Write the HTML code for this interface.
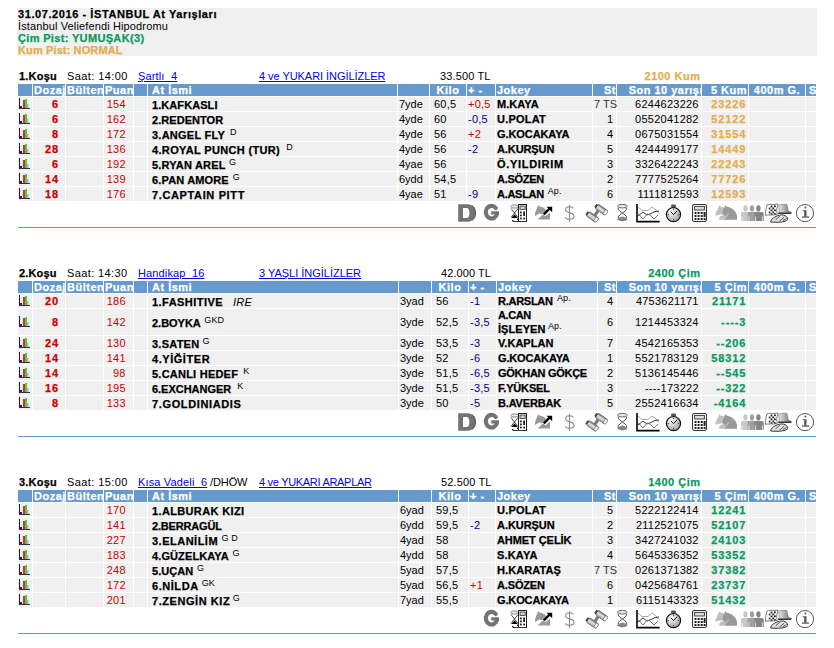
<!DOCTYPE html>
<html><head><meta charset="utf-8"><style>
html,body{margin:0;padding:0;background:#fff;width:834px;height:648px;overflow:hidden;position:relative}
body{font-family:"Liberation Sans",sans-serif;font-size:11px;color:#000}
.t{position:absolute;line-height:12px;white-space:nowrap}
.b{-webkit-text-stroke:0.3px}
.r{position:absolute}
.ci{position:absolute}
.icons{position:absolute;left:0;width:834px;height:26px}
.icons svg{position:absolute;top:0}
u{text-decoration:underline}
</style></head><body>
<div class="r" style="left:17px;top:8px;width:800px;height:48px;background:#f0f0f0"></div>
<div class="t" style="left:18px;top:8px;font-weight:bold;-webkit-text-stroke:0.25px;letter-spacing:0.58px;">31.07.2016 - İSTANBUL At Yarışları</div>
<div class="t" style="left:18px;top:20px;letter-spacing:0.13px;">İstanbul Veliefendi Hipodromu</div>
<div class="t" style="left:18px;top:32px;font-weight:bold;-webkit-text-stroke:0.25px;color:#0a9a5e;letter-spacing:0.34px;">Çim Pist: YUMUŞAK(3)</div>
<div class="t" style="left:18px;top:44px;font-weight:bold;-webkit-text-stroke:0.25px;color:#e3ae4e;letter-spacing:0.122px;">Kum Pist: NORMAL</div>
<div class="t" style="left:19px;top:70px;font-weight:bold;-webkit-text-stroke:0.25px;letter-spacing:0.2px;">1.Koşu</div>
<div class="t" style="left:67px;top:70px;letter-spacing:0.4px;">Saat: 14:00</div>
<div class="t" style="left:138px;top:70px;color:#0000ee;letter-spacing:0.15px;"><u>Şartlı&nbsp; 4</u></div>
<div class="t" style="left:259px;top:70px;color:#0000ee;letter-spacing:-0.052px;"><u>4 ve YUKARI İNGİLİZLER</u></div>
<div class="t" style="left:440px;top:70px;letter-spacing:0.125px;">33.500 TL</div>
<div class="t" style="left:400.5px;top:70px;width:300px;text-align:right;font-weight:bold;-webkit-text-stroke:0.25px;color:#e3ae4e;letter-spacing:0.5px;">2100 Kum</div>
<div class="r" style="left:18px;top:84px;width:14px;height:12px;background:#6699cc;overflow:hidden"></div>
<div class="r" style="left:33px;top:84px;width:32px;height:12px;background:#6699cc;overflow:hidden"><div class="t" style="top:0;left:1px;font-weight:bold;-webkit-text-stroke:0.25px;color:#fff;letter-spacing:0.5px">Dozaj</div></div>
<div class="r" style="left:66px;top:84px;width:37px;height:12px;background:#6699cc;overflow:hidden"><div class="t" style="top:0;left:1px;font-weight:bold;-webkit-text-stroke:0.25px;color:#fff;letter-spacing:0.5px">Bülten</div></div>
<div class="r" style="left:104px;top:84px;width:29px;height:12px;background:#6699cc;overflow:hidden"><div class="t" style="top:0;left:1px;font-weight:bold;-webkit-text-stroke:0.25px;color:#fff;letter-spacing:0.5px">Puan</div></div>
<div class="r" style="left:134px;top:84px;width:13px;height:12px;background:#6699cc;overflow:hidden"></div>
<div class="r" style="left:148px;top:84px;width:249px;height:12px;background:#6699cc;overflow:hidden"><div class="t" style="top:0;left:4px;font-weight:bold;-webkit-text-stroke:0.25px;color:#fff;letter-spacing:0.5px">At İsmi</div></div>
<div class="r" style="left:398px;top:84px;width:31px;height:12px;background:#6699cc;overflow:hidden"></div>
<div class="r" style="left:430px;top:84px;width:36px;height:12px;background:#6699cc;overflow:hidden"><div class="t" style="top:0;left:-50px;width:136px;text-align:center;font-weight:bold;-webkit-text-stroke:0.25px;color:#fff;letter-spacing:0.5px">Kilo</div></div>
<div class="r" style="left:467px;top:84px;width:28px;height:12px;background:#6699cc;overflow:hidden"><div class="t" style="top:0;left:1px;font-weight:bold;-webkit-text-stroke:0.25px;color:#fff;letter-spacing:0.5px">+ -</div></div>
<div class="r" style="left:496px;top:84px;width:96px;height:12px;background:#6699cc;overflow:hidden"><div class="t" style="top:0;left:1px;font-weight:bold;-webkit-text-stroke:0.25px;color:#fff;letter-spacing:0.5px">Jokey</div></div>
<div class="r" style="left:593px;top:84px;width:23px;height:12px;background:#6699cc;overflow:hidden"><div class="t" style="top:0;right:0px;font-weight:bold;-webkit-text-stroke:0.25px;color:#fff;letter-spacing:0.5px">St</div></div>
<div class="r" style="left:617px;top:84px;width:84px;height:12px;background:#6699cc;overflow:hidden"><div class="t" style="top:0;right:-2px;font-weight:bold;-webkit-text-stroke:0.25px;color:#fff;letter-spacing:0.5px">Son 10 yarışı</div></div>
<div class="r" style="left:702px;top:84px;width:46px;height:12px;background:#6699cc;overflow:hidden"><div class="t" style="top:0;right:1px;font-weight:bold;-webkit-text-stroke:0.25px;color:#fff;letter-spacing:0.5px">5 Kum</div></div>
<div class="r" style="left:749px;top:84px;width:56px;height:12px;background:#6699cc;overflow:hidden"><div class="t" style="top:0;left:-50px;width:156px;text-align:center;font-weight:bold;-webkit-text-stroke:0.25px;color:#fff;letter-spacing:0.5px">400m G.</div></div>
<div class="r" style="left:806px;top:84px;width:10px;height:12px;background:#6699cc;overflow:hidden"><div class="t" style="top:0;left:3px;font-weight:bold;-webkit-text-stroke:0.25px;color:#fff;letter-spacing:0.5px">S</div></div>
<div class="r" style="left:18px;top:97px;width:14px;height:14px;background:#f0f0f0"></div>
<div class="r" style="left:33px;top:97px;width:32px;height:14px;background:#f0f0f0"></div>
<div class="r" style="left:66px;top:97px;width:37px;height:14px;background:#f0f0f0"></div>
<div class="r" style="left:104px;top:97px;width:29px;height:14px;background:#f0f0f0"></div>
<div class="r" style="left:134px;top:97px;width:13px;height:14px;background:#f0f0f0"></div>
<div class="r" style="left:148px;top:97px;width:249px;height:14px;background:#f0f0f0"></div>
<div class="r" style="left:398px;top:97px;width:31px;height:14px;background:#f0f0f0"></div>
<div class="r" style="left:430px;top:97px;width:36px;height:14px;background:#f0f0f0"></div>
<div class="r" style="left:467px;top:97px;width:28px;height:14px;background:#f0f0f0"></div>
<div class="r" style="left:496px;top:97px;width:96px;height:14px;background:#f0f0f0"></div>
<div class="r" style="left:593px;top:97px;width:23px;height:14px;background:#f0f0f0"></div>
<div class="r" style="left:617px;top:97px;width:84px;height:14px;background:#f0f0f0"></div>
<div class="r" style="left:702px;top:97px;width:46px;height:14px;background:#f0f0f0"></div>
<div class="r" style="left:749px;top:97px;width:56px;height:14px;background:#f0f0f0"></div>
<div class="r" style="left:806px;top:97px;width:10px;height:14px;background:#f0f0f0"></div>
<svg class="ci" style="left:18px;top:97px" width="14" height="14" viewBox="0 0 14 14"><rect x="1" y="1" width="1" height="11" fill="#222"/><rect x="1" y="11" width="11" height="1" fill="#333"/><rect x="2" y="9" width="2" height="2" fill="#660066"/><rect x="4" y="7" width="1" height="4" fill="#cceeff"/><rect x="5" y="3" width="2" height="8" fill="#ee2222"/><rect x="7" y="2" width="2" height="9" fill="#33dd33"/><rect x="9" y="7" width="1.5" height="4" fill="#aaaaff"/></svg>
<div class="t" style="left:-241.2px;top:98px;width:300px;text-align:right;font-weight:bold;-webkit-text-stroke:0.25px;color:#cc0000;letter-spacing:0.8px;">6</div>
<div class="t" style="left:-174.25px;top:98px;width:300px;text-align:right;color:#cc0000;letter-spacing:0.25px;">154</div>
<div class="t" style="left:152px;top:99px;font-weight:bold;-webkit-text-stroke:0.25px;letter-spacing:0.074px;">1.KAFKASLI</div>
<div class="t" style="left:399px;top:98px;letter-spacing:0px;">7yde</div>
<div class="t" style="left:434px;top:98px;letter-spacing:0.25px;">60,5</div>
<div class="t" style="left:468px;top:98px;color:#cc0000;letter-spacing:0.25px;">+0,5</div>
<div class="t" style="left:497px;top:98px;font-weight:bold;-webkit-text-stroke:0.25px;letter-spacing:0.05px;">M.KAYA</div>
<div class="t" style="left:594px;top:98px;color:#333;letter-spacing:0.05px;">7 TS</div>
<div class="t" style="left:398.75px;top:98px;width:300px;text-align:right;letter-spacing:0.25px;">6244623226</div>
<div class="t" style="left:446.4px;top:98px;width:300px;text-align:right;font-weight:bold;-webkit-text-stroke:0.25px;color:#e3ae4e;letter-spacing:0.9px;">23226</div>
<div class="r" style="left:18px;top:112px;width:14px;height:14px;background:#f0f0f0"></div>
<div class="r" style="left:33px;top:112px;width:32px;height:14px;background:#f0f0f0"></div>
<div class="r" style="left:66px;top:112px;width:37px;height:14px;background:#f0f0f0"></div>
<div class="r" style="left:104px;top:112px;width:29px;height:14px;background:#f0f0f0"></div>
<div class="r" style="left:134px;top:112px;width:13px;height:14px;background:#f0f0f0"></div>
<div class="r" style="left:148px;top:112px;width:249px;height:14px;background:#f0f0f0"></div>
<div class="r" style="left:398px;top:112px;width:31px;height:14px;background:#f0f0f0"></div>
<div class="r" style="left:430px;top:112px;width:36px;height:14px;background:#f0f0f0"></div>
<div class="r" style="left:467px;top:112px;width:28px;height:14px;background:#f0f0f0"></div>
<div class="r" style="left:496px;top:112px;width:96px;height:14px;background:#f0f0f0"></div>
<div class="r" style="left:593px;top:112px;width:23px;height:14px;background:#f0f0f0"></div>
<div class="r" style="left:617px;top:112px;width:84px;height:14px;background:#f0f0f0"></div>
<div class="r" style="left:702px;top:112px;width:46px;height:14px;background:#f0f0f0"></div>
<div class="r" style="left:749px;top:112px;width:56px;height:14px;background:#f0f0f0"></div>
<div class="r" style="left:806px;top:112px;width:10px;height:14px;background:#f0f0f0"></div>
<svg class="ci" style="left:18px;top:112px" width="14" height="14" viewBox="0 0 14 14"><rect x="1" y="1" width="1" height="11" fill="#222"/><rect x="1" y="11" width="11" height="1" fill="#333"/><rect x="2" y="9" width="2" height="2" fill="#660066"/><rect x="4" y="7" width="1" height="4" fill="#cceeff"/><rect x="5" y="3" width="2" height="8" fill="#ee2222"/><rect x="7" y="2" width="2" height="9" fill="#33dd33"/><rect x="9" y="7" width="1.5" height="4" fill="#aaaaff"/></svg>
<div class="t" style="left:-241.2px;top:113px;width:300px;text-align:right;font-weight:bold;-webkit-text-stroke:0.25px;color:#cc0000;letter-spacing:0.8px;">6</div>
<div class="t" style="left:-174.25px;top:113px;width:300px;text-align:right;color:#cc0000;letter-spacing:0.25px;">162</div>
<div class="t" style="left:152px;top:114px;font-weight:bold;-webkit-text-stroke:0.25px;letter-spacing:0.05px;">2.REDENTOR</div>
<div class="t" style="left:399px;top:113px;letter-spacing:0px;">4yde</div>
<div class="t" style="left:434px;top:113px;letter-spacing:0.25px;">60</div>
<div class="t" style="left:468px;top:113px;color:#000080;letter-spacing:0.25px;">-0,5</div>
<div class="t" style="left:497px;top:113px;font-weight:bold;-webkit-text-stroke:0.25px;letter-spacing:0.217px;">U.POLAT</div>
<div class="t" style="left:313px;top:113px;width:300px;text-align:right;">1</div>
<div class="t" style="left:398.75px;top:113px;width:300px;text-align:right;letter-spacing:0.25px;">0552041282</div>
<div class="t" style="left:446.4px;top:113px;width:300px;text-align:right;font-weight:bold;-webkit-text-stroke:0.25px;color:#e3ae4e;letter-spacing:0.9px;">52122</div>
<div class="r" style="left:18px;top:127px;width:14px;height:14px;background:#f0f0f0"></div>
<div class="r" style="left:33px;top:127px;width:32px;height:14px;background:#f0f0f0"></div>
<div class="r" style="left:66px;top:127px;width:37px;height:14px;background:#f0f0f0"></div>
<div class="r" style="left:104px;top:127px;width:29px;height:14px;background:#f0f0f0"></div>
<div class="r" style="left:134px;top:127px;width:13px;height:14px;background:#f0f0f0"></div>
<div class="r" style="left:148px;top:127px;width:249px;height:14px;background:#f0f0f0"></div>
<div class="r" style="left:398px;top:127px;width:31px;height:14px;background:#f0f0f0"></div>
<div class="r" style="left:430px;top:127px;width:36px;height:14px;background:#f0f0f0"></div>
<div class="r" style="left:467px;top:127px;width:28px;height:14px;background:#f0f0f0"></div>
<div class="r" style="left:496px;top:127px;width:96px;height:14px;background:#f0f0f0"></div>
<div class="r" style="left:593px;top:127px;width:23px;height:14px;background:#f0f0f0"></div>
<div class="r" style="left:617px;top:127px;width:84px;height:14px;background:#f0f0f0"></div>
<div class="r" style="left:702px;top:127px;width:46px;height:14px;background:#f0f0f0"></div>
<div class="r" style="left:749px;top:127px;width:56px;height:14px;background:#f0f0f0"></div>
<div class="r" style="left:806px;top:127px;width:10px;height:14px;background:#f0f0f0"></div>
<svg class="ci" style="left:18px;top:127px" width="14" height="14" viewBox="0 0 14 14"><rect x="1" y="1" width="1" height="11" fill="#222"/><rect x="1" y="11" width="11" height="1" fill="#333"/><rect x="2" y="9" width="2" height="2" fill="#660066"/><rect x="4" y="7" width="1" height="4" fill="#cceeff"/><rect x="5" y="3" width="2" height="8" fill="#ee2222"/><rect x="7" y="2" width="2" height="9" fill="#33dd33"/><rect x="9" y="7" width="1.5" height="4" fill="#aaaaff"/></svg>
<div class="t" style="left:-241.2px;top:128px;width:300px;text-align:right;font-weight:bold;-webkit-text-stroke:0.25px;color:#cc0000;letter-spacing:0.8px;">8</div>
<div class="t" style="left:-174.25px;top:128px;width:300px;text-align:right;color:#cc0000;letter-spacing:0.25px;">172</div>
<div class="t" style="left:152px;top:129px;font-weight:bold;-webkit-text-stroke:0.25px;letter-spacing:0.25px;">3.ANGEL FLY</div>
<div class="t" style="left:230px;top:126px;letter-spacing:0.1px;font-size:9px;">D</div>
<div class="t" style="left:399px;top:128px;letter-spacing:0px;">4yde</div>
<div class="t" style="left:434px;top:128px;letter-spacing:0.25px;">56</div>
<div class="t" style="left:468px;top:128px;color:#cc0000;letter-spacing:0.25px;">+2</div>
<div class="t" style="left:497px;top:128px;font-weight:bold;-webkit-text-stroke:0.25px;letter-spacing:-0.085px;">G.KOCAKAYA</div>
<div class="t" style="left:313px;top:128px;width:300px;text-align:right;">4</div>
<div class="t" style="left:398.75px;top:128px;width:300px;text-align:right;letter-spacing:0.25px;">0675031554</div>
<div class="t" style="left:446.4px;top:128px;width:300px;text-align:right;font-weight:bold;-webkit-text-stroke:0.25px;color:#e3ae4e;letter-spacing:0.9px;">31554</div>
<div class="r" style="left:18px;top:142px;width:14px;height:14px;background:#f0f0f0"></div>
<div class="r" style="left:33px;top:142px;width:32px;height:14px;background:#f0f0f0"></div>
<div class="r" style="left:66px;top:142px;width:37px;height:14px;background:#f0f0f0"></div>
<div class="r" style="left:104px;top:142px;width:29px;height:14px;background:#f0f0f0"></div>
<div class="r" style="left:134px;top:142px;width:13px;height:14px;background:#f0f0f0"></div>
<div class="r" style="left:148px;top:142px;width:249px;height:14px;background:#f0f0f0"></div>
<div class="r" style="left:398px;top:142px;width:31px;height:14px;background:#f0f0f0"></div>
<div class="r" style="left:430px;top:142px;width:36px;height:14px;background:#f0f0f0"></div>
<div class="r" style="left:467px;top:142px;width:28px;height:14px;background:#f0f0f0"></div>
<div class="r" style="left:496px;top:142px;width:96px;height:14px;background:#f0f0f0"></div>
<div class="r" style="left:593px;top:142px;width:23px;height:14px;background:#f0f0f0"></div>
<div class="r" style="left:617px;top:142px;width:84px;height:14px;background:#f0f0f0"></div>
<div class="r" style="left:702px;top:142px;width:46px;height:14px;background:#f0f0f0"></div>
<div class="r" style="left:749px;top:142px;width:56px;height:14px;background:#f0f0f0"></div>
<div class="r" style="left:806px;top:142px;width:10px;height:14px;background:#f0f0f0"></div>
<svg class="ci" style="left:18px;top:142px" width="14" height="14" viewBox="0 0 14 14"><rect x="1" y="1" width="1" height="11" fill="#222"/><rect x="1" y="11" width="11" height="1" fill="#333"/><rect x="2" y="9" width="2" height="2" fill="#660066"/><rect x="4" y="7" width="1" height="4" fill="#cceeff"/><rect x="5" y="3" width="2" height="8" fill="#ee2222"/><rect x="7" y="2" width="2" height="9" fill="#33dd33"/><rect x="9" y="7" width="1.5" height="4" fill="#aaaaff"/></svg>
<div class="t" style="left:-241.2px;top:143px;width:300px;text-align:right;font-weight:bold;-webkit-text-stroke:0.25px;color:#cc0000;letter-spacing:0.8px;">28</div>
<div class="t" style="left:-174.25px;top:143px;width:300px;text-align:right;color:#cc0000;letter-spacing:0.25px;">136</div>
<div class="t" style="left:152px;top:144px;font-weight:bold;-webkit-text-stroke:0.25px;letter-spacing:0.339px;">4.ROYAL PUNCH (TUR)</div>
<div class="t" style="left:286.3px;top:141px;letter-spacing:0.1px;font-size:9px;">D</div>
<div class="t" style="left:399px;top:143px;letter-spacing:0px;">4yde</div>
<div class="t" style="left:434px;top:143px;letter-spacing:0.25px;">56</div>
<div class="t" style="left:468px;top:143px;color:#000080;letter-spacing:0.25px;">-2</div>
<div class="t" style="left:497px;top:143px;font-weight:bold;-webkit-text-stroke:0.25px;letter-spacing:-0.093px;">A.KURŞUN</div>
<div class="t" style="left:313px;top:143px;width:300px;text-align:right;">5</div>
<div class="t" style="left:398.75px;top:143px;width:300px;text-align:right;letter-spacing:0.25px;">4244499177</div>
<div class="t" style="left:446.4px;top:143px;width:300px;text-align:right;font-weight:bold;-webkit-text-stroke:0.25px;color:#e3ae4e;letter-spacing:0.9px;">14449</div>
<div class="r" style="left:18px;top:157px;width:14px;height:14px;background:#f0f0f0"></div>
<div class="r" style="left:33px;top:157px;width:32px;height:14px;background:#f0f0f0"></div>
<div class="r" style="left:66px;top:157px;width:37px;height:14px;background:#f0f0f0"></div>
<div class="r" style="left:104px;top:157px;width:29px;height:14px;background:#f0f0f0"></div>
<div class="r" style="left:134px;top:157px;width:13px;height:14px;background:#f0f0f0"></div>
<div class="r" style="left:148px;top:157px;width:249px;height:14px;background:#f0f0f0"></div>
<div class="r" style="left:398px;top:157px;width:31px;height:14px;background:#f0f0f0"></div>
<div class="r" style="left:430px;top:157px;width:36px;height:14px;background:#f0f0f0"></div>
<div class="r" style="left:467px;top:157px;width:28px;height:14px;background:#f0f0f0"></div>
<div class="r" style="left:496px;top:157px;width:96px;height:14px;background:#f0f0f0"></div>
<div class="r" style="left:593px;top:157px;width:23px;height:14px;background:#f0f0f0"></div>
<div class="r" style="left:617px;top:157px;width:84px;height:14px;background:#f0f0f0"></div>
<div class="r" style="left:702px;top:157px;width:46px;height:14px;background:#f0f0f0"></div>
<div class="r" style="left:749px;top:157px;width:56px;height:14px;background:#f0f0f0"></div>
<div class="r" style="left:806px;top:157px;width:10px;height:14px;background:#f0f0f0"></div>
<svg class="ci" style="left:18px;top:157px" width="14" height="14" viewBox="0 0 14 14"><rect x="1" y="1" width="1" height="11" fill="#222"/><rect x="1" y="11" width="11" height="1" fill="#333"/><rect x="2" y="9" width="2" height="2" fill="#660066"/><rect x="4" y="7" width="1" height="4" fill="#cceeff"/><rect x="5" y="3" width="2" height="8" fill="#ee2222"/><rect x="7" y="2" width="2" height="9" fill="#33dd33"/><rect x="9" y="7" width="1.5" height="4" fill="#aaaaff"/></svg>
<div class="t" style="left:-241.2px;top:158px;width:300px;text-align:right;font-weight:bold;-webkit-text-stroke:0.25px;color:#cc0000;letter-spacing:0.8px;">6</div>
<div class="t" style="left:-174.25px;top:158px;width:300px;text-align:right;color:#cc0000;letter-spacing:0.25px;">192</div>
<div class="t" style="left:152px;top:159px;font-weight:bold;-webkit-text-stroke:0.25px;letter-spacing:0.19px;">5.RYAN AREL</div>
<div class="t" style="left:229px;top:156px;letter-spacing:0.1px;font-size:9px;">G</div>
<div class="t" style="left:399px;top:158px;letter-spacing:0px;">4yae</div>
<div class="t" style="left:434px;top:158px;letter-spacing:0.25px;">56</div>
<div class="t" style="left:497px;top:158px;font-weight:bold;-webkit-text-stroke:0.25px;letter-spacing:0.695px;">Ö.YILDIRIM</div>
<div class="t" style="left:313px;top:158px;width:300px;text-align:right;">3</div>
<div class="t" style="left:398.75px;top:158px;width:300px;text-align:right;letter-spacing:0.25px;">3326422243</div>
<div class="t" style="left:446.4px;top:158px;width:300px;text-align:right;font-weight:bold;-webkit-text-stroke:0.25px;color:#e3ae4e;letter-spacing:0.9px;">22243</div>
<div class="r" style="left:18px;top:172px;width:14px;height:14px;background:#f0f0f0"></div>
<div class="r" style="left:33px;top:172px;width:32px;height:14px;background:#f0f0f0"></div>
<div class="r" style="left:66px;top:172px;width:37px;height:14px;background:#f0f0f0"></div>
<div class="r" style="left:104px;top:172px;width:29px;height:14px;background:#f0f0f0"></div>
<div class="r" style="left:134px;top:172px;width:13px;height:14px;background:#f0f0f0"></div>
<div class="r" style="left:148px;top:172px;width:249px;height:14px;background:#f0f0f0"></div>
<div class="r" style="left:398px;top:172px;width:31px;height:14px;background:#f0f0f0"></div>
<div class="r" style="left:430px;top:172px;width:36px;height:14px;background:#f0f0f0"></div>
<div class="r" style="left:467px;top:172px;width:28px;height:14px;background:#f0f0f0"></div>
<div class="r" style="left:496px;top:172px;width:96px;height:14px;background:#f0f0f0"></div>
<div class="r" style="left:593px;top:172px;width:23px;height:14px;background:#f0f0f0"></div>
<div class="r" style="left:617px;top:172px;width:84px;height:14px;background:#f0f0f0"></div>
<div class="r" style="left:702px;top:172px;width:46px;height:14px;background:#f0f0f0"></div>
<div class="r" style="left:749px;top:172px;width:56px;height:14px;background:#f0f0f0"></div>
<div class="r" style="left:806px;top:172px;width:10px;height:14px;background:#f0f0f0"></div>
<svg class="ci" style="left:18px;top:172px" width="14" height="14" viewBox="0 0 14 14"><rect x="1" y="1" width="1" height="11" fill="#222"/><rect x="1" y="11" width="11" height="1" fill="#333"/><rect x="2" y="9" width="2" height="2" fill="#660066"/><rect x="4" y="7" width="1" height="4" fill="#cceeff"/><rect x="5" y="3" width="2" height="8" fill="#ee2222"/><rect x="7" y="2" width="2" height="9" fill="#33dd33"/><rect x="9" y="7" width="1.5" height="4" fill="#aaaaff"/></svg>
<div class="t" style="left:-241.2px;top:173px;width:300px;text-align:right;font-weight:bold;-webkit-text-stroke:0.25px;color:#cc0000;letter-spacing:0.8px;">14</div>
<div class="t" style="left:-174.25px;top:173px;width:300px;text-align:right;color:#cc0000;letter-spacing:0.25px;">139</div>
<div class="t" style="left:152px;top:174px;font-weight:bold;-webkit-text-stroke:0.25px;letter-spacing:0.15px;">6.PAN AMORE</div>
<div class="t" style="left:232.7px;top:171px;letter-spacing:0.1px;font-size:9px;">G</div>
<div class="t" style="left:399px;top:173px;letter-spacing:0px;">6ydd</div>
<div class="t" style="left:434px;top:173px;letter-spacing:0.25px;">54,5</div>
<div class="t" style="left:497px;top:173px;font-weight:bold;-webkit-text-stroke:0.25px;letter-spacing:-0.283px;">A.SÖZEN</div>
<div class="t" style="left:313px;top:173px;width:300px;text-align:right;">2</div>
<div class="t" style="left:398.75px;top:173px;width:300px;text-align:right;letter-spacing:0.25px;">7777525264</div>
<div class="t" style="left:446.4px;top:173px;width:300px;text-align:right;font-weight:bold;-webkit-text-stroke:0.25px;color:#e3ae4e;letter-spacing:0.9px;">77726</div>
<div class="r" style="left:18px;top:187px;width:14px;height:14px;background:#f0f0f0"></div>
<div class="r" style="left:33px;top:187px;width:32px;height:14px;background:#f0f0f0"></div>
<div class="r" style="left:66px;top:187px;width:37px;height:14px;background:#f0f0f0"></div>
<div class="r" style="left:104px;top:187px;width:29px;height:14px;background:#f0f0f0"></div>
<div class="r" style="left:134px;top:187px;width:13px;height:14px;background:#f0f0f0"></div>
<div class="r" style="left:148px;top:187px;width:249px;height:14px;background:#f0f0f0"></div>
<div class="r" style="left:398px;top:187px;width:31px;height:14px;background:#f0f0f0"></div>
<div class="r" style="left:430px;top:187px;width:36px;height:14px;background:#f0f0f0"></div>
<div class="r" style="left:467px;top:187px;width:28px;height:14px;background:#f0f0f0"></div>
<div class="r" style="left:496px;top:187px;width:96px;height:14px;background:#f0f0f0"></div>
<div class="r" style="left:593px;top:187px;width:23px;height:14px;background:#f0f0f0"></div>
<div class="r" style="left:617px;top:187px;width:84px;height:14px;background:#f0f0f0"></div>
<div class="r" style="left:702px;top:187px;width:46px;height:14px;background:#f0f0f0"></div>
<div class="r" style="left:749px;top:187px;width:56px;height:14px;background:#f0f0f0"></div>
<div class="r" style="left:806px;top:187px;width:10px;height:14px;background:#f0f0f0"></div>
<svg class="ci" style="left:18px;top:187px" width="14" height="14" viewBox="0 0 14 14"><rect x="1" y="1" width="1" height="11" fill="#222"/><rect x="1" y="11" width="11" height="1" fill="#333"/><rect x="2" y="9" width="2" height="2" fill="#660066"/><rect x="4" y="7" width="1" height="4" fill="#cceeff"/><rect x="5" y="3" width="2" height="8" fill="#ee2222"/><rect x="7" y="2" width="2" height="9" fill="#33dd33"/><rect x="9" y="7" width="1.5" height="4" fill="#aaaaff"/></svg>
<div class="t" style="left:-241.2px;top:188px;width:300px;text-align:right;font-weight:bold;-webkit-text-stroke:0.25px;color:#cc0000;letter-spacing:0.8px;">18</div>
<div class="t" style="left:-174.25px;top:188px;width:300px;text-align:right;color:#cc0000;letter-spacing:0.25px;">176</div>
<div class="t" style="left:152px;top:189px;font-weight:bold;-webkit-text-stroke:0.25px;letter-spacing:0.634px;">7.CAPTAIN PITT</div>
<div class="t" style="left:399px;top:188px;letter-spacing:0px;">4yae</div>
<div class="t" style="left:434px;top:188px;letter-spacing:0.25px;">51</div>
<div class="t" style="left:468px;top:188px;color:#000080;letter-spacing:0.25px;">-9</div>
<div class="t" style="left:497px;top:188px;font-weight:bold;-webkit-text-stroke:0.25px;letter-spacing:-0.283px;">A.ASLAN</div>
<div class="t" style="left:547.7px;top:185px;letter-spacing:0.1px;font-size:9px;">Ap.</div>
<div class="t" style="left:313px;top:188px;width:300px;text-align:right;">6</div>
<div class="t" style="left:398.75px;top:188px;width:300px;text-align:right;letter-spacing:0.25px;">1111812593</div>
<div class="t" style="left:446.4px;top:188px;width:300px;text-align:right;font-weight:bold;-webkit-text-stroke:0.25px;color:#e3ae4e;letter-spacing:0.9px;">12593</div>
<div class="icons" style="top:202px"><svg width="834" height="26" viewBox="0 202 834 26" style="left:0;top:0"><path fill-rule="evenodd" fill="#737373" d="M458.2,204.2 H467.5 C472.6,204.2 475.5,207.8 475.5,213 C475.5,218.2 472.6,221.7 467.5,221.7 H458.2 Z M463,208 H466.6 C468.4,208 469.4,209.8 469.4,213 C469.4,216.2 468.4,218 466.6,218 H463 Z"/><path d="M472,205.6 C474.6,207.2 475.6,210 475.6,213 C475.6,216 474.6,218.8 472,220.4" stroke="#222" stroke-width="0.7" fill="none"/></svg>
<svg width="834" height="26" viewBox="0 202 834 26" style="left:0;top:0">
<defs>
<linearGradient id="gb" x1="0" y1="0" x2="1" y2="1"><stop offset="0" stop-color="#444"/><stop offset="0.5" stop-color="#bbb"/><stop offset="1" stop-color="#555"/></linearGradient>
<linearGradient id="gb2" x1="0" y1="0" x2="0" y2="1"><stop offset="0" stop-color="#666"/><stop offset="0.45" stop-color="#e6e6e6"/><stop offset="1" stop-color="#999"/></linearGradient>
<radialGradient id="gs" cx="0.35" cy="0.3" r="0.8"><stop offset="0" stop-color="#fff"/><stop offset="1" stop-color="#999"/></radialGradient>
<linearGradient id="gh2" x1="0" y1="0" x2="1" y2="0"><stop offset="0" stop-color="#bbb"/><stop offset="1" stop-color="#555"/></linearGradient>
<linearGradient id="gh3" x1="0" y1="0" x2="1" y2="0"><stop offset="0" stop-color="#e8e8e8"/><stop offset="0.5" stop-color="#aaa"/><stop offset="1" stop-color="#666"/></linearGradient>
<linearGradient id="gh" x1="0" y1="0" x2="1" y2="0"><stop offset="0" stop-color="#eee"/><stop offset="1" stop-color="#666"/></linearGradient>
</defs>
<path d="M495.8,208 A5.7,6.3 0 1 0 497.1,213.6" stroke="#737373" stroke-width="4.1" fill="none" stroke-linecap="round"/><path d="M491.2,212.9 H498.9" stroke="#737373" stroke-width="3.2" fill="none"/>
<g>
<ellipse cx="514.5" cy="206.5" rx="3.6" ry="1.6" fill="#f4f4f4" stroke="#777" stroke-width="0.9"/>
<path d="M511,208.5 L518,217.5 M518,208.5 L511,217.5" stroke="#333" stroke-width="0.9"/>
<path d="M511.2,218 L514.5,214.6 L517.8,218 Z" fill="#000"/>
<rect x="518.5" y="204.5" width="8" height="17" fill="#fff" stroke="#222" stroke-width="1"/>
<rect x="520" y="206" width="5.2" height="3.4" fill="#ccc" stroke="#333" stroke-width="0.8"/>
<g fill="#222"><rect x="520" y="211.5" width="1.8" height="1.8"/><rect x="523.2" y="211.5" width="1.8" height="4.5"/><rect x="520" y="214.5" width="1.8" height="1.8"/><rect x="520" y="217.6" width="1.8" height="1.8"/><rect x="523.2" y="217.6" width="1.8" height="1.8"/><rect x="517" y="218.6" width="1.4" height="1.4"/><rect x="512" y="220" width="1.4" height="1.4"/></g>
<rect x="513" y="221" width="13.5" height="1" fill="#333"/>
</g>
<g fill="#999">
<path d="M538.4,205 L539.5,206.5 C543,206.8 545.5,208.6 546.2,210.6 L541.6,214.6 L539.6,213.2 L535,216 C534.6,213 536.4,209 538.4,205 Z"/>
<path d="M537.5,219.6 L543.2,214.2 L545.2,216.6 L550,212.4 L550,219.6 Z"/>
</g>
<path d="M543.8,214.4 L550.2,208" stroke="#000" stroke-width="2.4"/>
<path d="M546.5,206.7 L552.2,206.7 L552.2,212.2 Z" fill="#000"/>
<path d="M569.5,205 V222 M573.3,208.4 C573,207.2 571.6,206.8 569.5,206.8 C567,206.8 565.6,208 565.6,209.7 C565.6,211.6 567.8,212.4 570,212.9 C572.6,213.5 574,214.7 574,216.6 C574,218.6 572.2,219.3 569.5,219.3 C567.2,219.3 565.8,218.6 565.4,217.3" stroke="#8a8a8a" stroke-width="1.1" fill="none"/>
<g transform="rotate(35 596.5 213)">
<rect x="589.5" y="215.8" width="12" height="5.6" rx="2" fill="url(#gb2)" stroke="#555" stroke-width="0.6"/>
<rect x="592.5" y="204.6" width="12" height="5.6" rx="2" fill="url(#gb2)" stroke="#555" stroke-width="0.6"/>
<rect x="595" y="210.2" width="3" height="5.6" fill="#777"/>
<ellipse cx="600" cy="218.6" rx="1.7" ry="2.8" fill="#f4f4f4" stroke="#555" stroke-width="0.6"/>
<ellipse cx="603.5" cy="207.4" rx="1.7" ry="2.8" fill="#f4f4f4" stroke="#555" stroke-width="0.6"/>
<rect x="588.2" y="216.6" width="2" height="4" fill="#444"/>
<rect x="591.2" y="205.4" width="2" height="4" fill="#444"/>
</g>
<g>
<ellipse cx="622.4" cy="206.2" rx="4.9" ry="1.8" fill="#e8e8e8" stroke="#666" stroke-width="1"/>
<path d="M618,207.8 C618,211 621.6,212 622.4,213 C623.2,212 626.8,211 626.8,207.8 M618,218.4 C618,215 621.6,214 622.4,213 C623.2,214 626.8,215 626.8,218.4" stroke="#333" stroke-width="0.9" fill="none"/>
<path d="M617.6,219.5 Q622.4,214.5 627.2,219.5 Q622.4,222.4 617.6,219.5 Z" fill="#888" stroke="#555" stroke-width="0.6"/>
</g>
<path d="M637,204 V221.6 H659.6" stroke="#000" stroke-width="1.6" fill="none"/>
<polyline points="638,207 642,210.5 648,210.5 652,207 655,209 659,213.5" stroke="#aaa" stroke-width="1" fill="none"/>
<polyline points="638,216 643,212 647,215 651,213.5 655,211.5 659,211" stroke="#222" stroke-width="0.9" fill="none"/>
<polyline points="638,213.5 643,219 647,214 650,215 654,219 658,215" stroke="#666" stroke-width="0.9" fill="none"/>
<rect x="671" y="204.6" width="5" height="2.6" rx="1.2" fill="#555"/>
<circle cx="673.5" cy="214.6" r="7.1" fill="url(#gs)" stroke="#111" stroke-width="1.2"/>
<polyline points="670.8,211.8 673.5,214.6 677.2,210.8" stroke="#111" stroke-width="1" fill="none"/>
<path d="M673.5,208.6 V210.2 M673.5,219 V220.6 M667.6,214.6 H669.2 M677.8,214.6 H679.4" stroke="#555" stroke-width="1"/>
<rect x="692.5" y="204.5" width="14" height="17" rx="1.5" fill="#fafafa" stroke="#333" stroke-width="1"/>
<rect x="694.6" y="206.4" width="9.8" height="3.6" fill="#ddd" stroke="#333" stroke-width="0.9"/>
<g fill="#222"><rect x="694.5" y="212" width="2" height="2"/><rect x="697.6" y="212" width="2" height="2"/><rect x="700.7" y="212" width="2" height="2"/><rect x="703.6" y="212" width="2" height="5"/>
<rect x="694.5" y="215" width="2" height="2"/><rect x="697.6" y="215" width="2" height="2"/><rect x="700.7" y="215" width="2" height="2"/>
<rect x="694.5" y="218" width="2" height="2"/><rect x="697.6" y="218" width="2" height="2"/><rect x="700.7" y="218" width="2" height="2"/><rect x="703.6" y="218" width="2" height="2"/></g>
<g fill="#c0c0c0">
<path d="M719.3,205 L720.3,206.6 C722,206.8 723.6,207.4 725,208.4 L723,214 L720.6,214.4 L716.4,215.6 C715.4,215.6 715,214.6 715.4,213.8 C716.8,210.6 718.4,208 719.3,205 Z"/>
<path d="M719,219.8 L719.6,217.2 C720.2,215.8 722,215.2 724,215 L725.6,219.8 Z"/>
</g>
<path d="M725.4,205 L726.4,206.4 C731.6,207.2 736.4,211 737,216 V219.8 H725 L724.4,215 C723.6,214.9 723,214.8 722.4,214.6 C722,212 723.6,208.6 725.4,205 Z" fill="#999"/>
<path d="M724.8,218.6 L728.6,213.4" stroke="#c4c4c4" stroke-width="1.1"/>
<g>
<ellipse cx="745.4" cy="208.4" rx="2.1" ry="3.1" fill="#c8c8c8"/>
<path d="M741,221 V213.6 C741,212.6 741.8,212 742.8,212 H748.5 V221 Z" fill="#c8c8c8"/>
<ellipse cx="752" cy="208.4" rx="2.1" ry="3.1" fill="#a0a0a0"/>
<path d="M747.6,221 V212 H755.5 V221 Z" fill="#a0a0a0"/>
<ellipse cx="758.4" cy="208.4" rx="2.2" ry="3.1" fill="#858585"/>
<path d="M754.4,221 V212 H761.8 C763,212 763.8,212.8 763.8,214 V221 Z" fill="#858585"/>
<path d="M742.2,216.4 V221 M749,216.4 V221 M755.6,216.4 V221 M762.4,216.4 V221" stroke="#f4f4f4" stroke-width="0.8"/>
</g>
<g>
<path d="M767,205 C769,204 772,204.6 774,204.4 C775.5,204.3 777,204 778,204.2 L776.6,209.6 L777.2,214.6 C775,214.8 772,215.2 770,215 C768.5,214.9 767,215 765.6,215.4 C765.4,212 766,208 767,205 Z" fill="#fff" stroke="#444" stroke-width="0.7"/>
<g fill="#222"><rect x="770.6" y="205.6" width="1.8" height="1.8"/><rect x="774" y="205.4" width="1.8" height="1.8"/><rect x="772.3" y="207.5" width="1.8" height="1.8"/><rect x="768.8" y="207.6" width="1.6" height="1.8"/><rect x="770.6" y="209.5" width="1.8" height="1.8"/><rect x="774" y="209.4" width="1.8" height="1.8"/><rect x="772.3" y="211.5" width="1.8" height="1.8"/><rect x="768.8" y="211.6" width="1.6" height="1.8"/><rect x="770.6" y="213.2" width="1.8" height="1.4"/><rect x="774" y="213.2" width="1.8" height="1.4"/></g>
<path d="M778.6,205.4 C779.4,204.4 784,204 787,204.4 L788.2,211 L791.4,212.4 L791,213.4 L779.6,213.4 Z" fill="url(#gh3)" stroke="#666" stroke-width="0.5"/>
<path d="M778,212.4 H788.6 L791.8,212.8 L790.8,214 H778 Z" fill="#3a3a3a"/>
<path d="M770.6,222 C771,219.4 773,217.8 776,216.4 C778,215.4 781,214.6 783.4,215 C786,215.6 788,217.6 787.8,219.6 C786,221.8 780,222.8 770.6,222 Z" fill="#e0e0e0" stroke="#222" stroke-width="0.9"/>
<path d="M775.6,219.8 L779.8,216.2 M779.4,221.2 L784.2,217.2 M783,220.6 L786.6,218.6" stroke="#444" stroke-width="0.9"/>
<circle cx="805" cy="213.1" r="8.6" fill="none" stroke="#555" stroke-width="1"/>
<g fill="#555"><circle cx="805.4" cy="207.4" r="1"/><rect x="804.2" y="210.2" width="2.3" height="6.4"/><rect x="802.8" y="210.2" width="1.6" height="1"/><rect x="802" y="216.4" width="7" height="1.3"/></g>
</svg>
</div>
<div class="r" style="left:18px;top:227px;width:798px;height:1px;background:#6699cc"></div>
<div class="t" style="left:19px;top:267px;font-weight:bold;-webkit-text-stroke:0.25px;letter-spacing:0.16px;">2.Koşu</div>
<div class="t" style="left:67px;top:267px;letter-spacing:0.39px;">Saat: 14:30</div>
<div class="t" style="left:138px;top:267px;color:#0000ee;letter-spacing:0.13px;"><u>Handikap&nbsp; 16</u></div>
<div class="t" style="left:259px;top:267px;color:#0000ee;letter-spacing:-0.016px;"><u>3 YAŞLI İNGİLİZLER</u></div>
<div class="t" style="left:441px;top:267px;letter-spacing:0.075px;">42.000 TL</div>
<div class="t" style="left:400.5px;top:267px;width:300px;text-align:right;font-weight:bold;-webkit-text-stroke:0.25px;color:#0a9a5e;letter-spacing:0.5px;">2400 Çim</div>
<div class="r" style="left:18px;top:281px;width:14px;height:12px;background:#6699cc;overflow:hidden"></div>
<div class="r" style="left:33px;top:281px;width:32px;height:12px;background:#6699cc;overflow:hidden"><div class="t" style="top:0;left:1px;font-weight:bold;-webkit-text-stroke:0.25px;color:#fff;letter-spacing:0.5px">Dozaj</div></div>
<div class="r" style="left:66px;top:281px;width:37px;height:12px;background:#6699cc;overflow:hidden"><div class="t" style="top:0;left:1px;font-weight:bold;-webkit-text-stroke:0.25px;color:#fff;letter-spacing:0.5px">Bülten</div></div>
<div class="r" style="left:104px;top:281px;width:29px;height:12px;background:#6699cc;overflow:hidden"><div class="t" style="top:0;left:1px;font-weight:bold;-webkit-text-stroke:0.25px;color:#fff;letter-spacing:0.5px">Puan</div></div>
<div class="r" style="left:134px;top:281px;width:13px;height:12px;background:#6699cc;overflow:hidden"></div>
<div class="r" style="left:148px;top:281px;width:250px;height:12px;background:#6699cc;overflow:hidden"><div class="t" style="top:0;left:4px;font-weight:bold;-webkit-text-stroke:0.25px;color:#fff;letter-spacing:0.5px">At İsmi</div></div>
<div class="r" style="left:399px;top:281px;width:32px;height:12px;background:#6699cc;overflow:hidden"></div>
<div class="r" style="left:432px;top:281px;width:36px;height:12px;background:#6699cc;overflow:hidden"><div class="t" style="top:0;left:-50px;width:136px;text-align:center;font-weight:bold;-webkit-text-stroke:0.25px;color:#fff;letter-spacing:0.5px">Kilo</div></div>
<div class="r" style="left:469px;top:281px;width:27px;height:12px;background:#6699cc;overflow:hidden"><div class="t" style="top:0;left:1px;font-weight:bold;-webkit-text-stroke:0.25px;color:#fff;letter-spacing:0.5px">+ -</div></div>
<div class="r" style="left:497px;top:281px;width:100px;height:12px;background:#6699cc;overflow:hidden"><div class="t" style="top:0;left:1px;font-weight:bold;-webkit-text-stroke:0.25px;color:#fff;letter-spacing:0.5px">Jokey</div></div>
<div class="r" style="left:598px;top:281px;width:18px;height:12px;background:#6699cc;overflow:hidden"><div class="t" style="top:0;right:0px;font-weight:bold;-webkit-text-stroke:0.25px;color:#fff;letter-spacing:0.5px">St</div></div>
<div class="r" style="left:617px;top:281px;width:84px;height:12px;background:#6699cc;overflow:hidden"><div class="t" style="top:0;right:-2px;font-weight:bold;-webkit-text-stroke:0.25px;color:#fff;letter-spacing:0.5px">Son 10 yarışı</div></div>
<div class="r" style="left:702px;top:281px;width:46px;height:12px;background:#6699cc;overflow:hidden"><div class="t" style="top:0;right:1px;font-weight:bold;-webkit-text-stroke:0.25px;color:#fff;letter-spacing:0.5px">5 Çim</div></div>
<div class="r" style="left:749px;top:281px;width:56px;height:12px;background:#6699cc;overflow:hidden"><div class="t" style="top:0;left:-50px;width:156px;text-align:center;font-weight:bold;-webkit-text-stroke:0.25px;color:#fff;letter-spacing:0.5px">400m G.</div></div>
<div class="r" style="left:806px;top:281px;width:10px;height:12px;background:#6699cc;overflow:hidden"><div class="t" style="top:0;left:3px;font-weight:bold;-webkit-text-stroke:0.25px;color:#fff;letter-spacing:0.5px">S</div></div>
<div class="r" style="left:18px;top:294px;width:14px;height:14px;background:#f0f0f0"></div>
<div class="r" style="left:33px;top:294px;width:32px;height:14px;background:#f0f0f0"></div>
<div class="r" style="left:66px;top:294px;width:37px;height:14px;background:#f0f0f0"></div>
<div class="r" style="left:104px;top:294px;width:29px;height:14px;background:#f0f0f0"></div>
<div class="r" style="left:134px;top:294px;width:13px;height:14px;background:#f0f0f0"></div>
<div class="r" style="left:148px;top:294px;width:250px;height:14px;background:#f0f0f0"></div>
<div class="r" style="left:399px;top:294px;width:32px;height:14px;background:#f0f0f0"></div>
<div class="r" style="left:432px;top:294px;width:36px;height:14px;background:#f0f0f0"></div>
<div class="r" style="left:469px;top:294px;width:27px;height:14px;background:#f0f0f0"></div>
<div class="r" style="left:497px;top:294px;width:100px;height:14px;background:#f0f0f0"></div>
<div class="r" style="left:598px;top:294px;width:18px;height:14px;background:#f0f0f0"></div>
<div class="r" style="left:617px;top:294px;width:84px;height:14px;background:#f0f0f0"></div>
<div class="r" style="left:702px;top:294px;width:46px;height:14px;background:#f0f0f0"></div>
<div class="r" style="left:749px;top:294px;width:56px;height:14px;background:#f0f0f0"></div>
<div class="r" style="left:806px;top:294px;width:10px;height:14px;background:#f0f0f0"></div>
<svg class="ci" style="left:18px;top:294px" width="14" height="14" viewBox="0 0 14 14"><rect x="1" y="1" width="1" height="11" fill="#222"/><rect x="1" y="11" width="11" height="1" fill="#333"/><rect x="2" y="9" width="2" height="2" fill="#660066"/><rect x="4" y="7" width="1" height="4" fill="#cceeff"/><rect x="5" y="3" width="2" height="8" fill="#ee2222"/><rect x="7" y="2" width="2" height="9" fill="#33dd33"/><rect x="9" y="7" width="1.5" height="4" fill="#aaaaff"/></svg>
<div class="t" style="left:-241.2px;top:295px;width:300px;text-align:right;font-weight:bold;-webkit-text-stroke:0.25px;color:#cc0000;letter-spacing:0.8px;">20</div>
<div class="t" style="left:-174.25px;top:295px;width:300px;text-align:right;color:#cc0000;letter-spacing:0.25px;">186</div>
<div class="t" style="left:152px;top:296px;font-weight:bold;-webkit-text-stroke:0.25px;letter-spacing:0.45px;">1.FASHITIVE</div>
<div class="t" style="left:233px;top:296px;font-style:italic;letter-spacing:0.2px;">IRE</div>
<div class="t" style="left:400px;top:295px;letter-spacing:0px;">3yad</div>
<div class="t" style="left:436px;top:295px;letter-spacing:0.25px;">56</div>
<div class="t" style="left:470px;top:295px;color:#000080;letter-spacing:0.25px;">-1</div>
<div class="t" style="left:498px;top:295px;font-weight:bold;-webkit-text-stroke:0.25px;letter-spacing:-0.263px;">R.ARSLAN</div>
<div class="t" style="left:557px;top:292px;letter-spacing:0.1px;font-size:9px;">Ap.</div>
<div class="t" style="left:313px;top:295px;width:300px;text-align:right;">4</div>
<div class="t" style="left:398.75px;top:295px;width:300px;text-align:right;letter-spacing:0.25px;">4753621171</div>
<div class="t" style="left:446.4px;top:295px;width:300px;text-align:right;font-weight:bold;-webkit-text-stroke:0.25px;color:#0a9a5e;letter-spacing:0.9px;">21171</div>
<div class="r" style="left:18px;top:309px;width:14px;height:26px;background:#f0f0f0"></div>
<div class="r" style="left:33px;top:309px;width:32px;height:26px;background:#f0f0f0"></div>
<div class="r" style="left:66px;top:309px;width:37px;height:26px;background:#f0f0f0"></div>
<div class="r" style="left:104px;top:309px;width:29px;height:26px;background:#f0f0f0"></div>
<div class="r" style="left:134px;top:309px;width:13px;height:26px;background:#f0f0f0"></div>
<div class="r" style="left:148px;top:309px;width:250px;height:26px;background:#f0f0f0"></div>
<div class="r" style="left:399px;top:309px;width:32px;height:26px;background:#f0f0f0"></div>
<div class="r" style="left:432px;top:309px;width:36px;height:26px;background:#f0f0f0"></div>
<div class="r" style="left:469px;top:309px;width:27px;height:26px;background:#f0f0f0"></div>
<div class="r" style="left:497px;top:309px;width:100px;height:26px;background:#f0f0f0"></div>
<div class="r" style="left:598px;top:309px;width:18px;height:26px;background:#f0f0f0"></div>
<div class="r" style="left:617px;top:309px;width:84px;height:26px;background:#f0f0f0"></div>
<div class="r" style="left:702px;top:309px;width:46px;height:26px;background:#f0f0f0"></div>
<div class="r" style="left:749px;top:309px;width:56px;height:26px;background:#f0f0f0"></div>
<div class="r" style="left:806px;top:309px;width:10px;height:26px;background:#f0f0f0"></div>
<svg class="ci" style="left:18px;top:315px" width="14" height="14" viewBox="0 0 14 14"><rect x="1" y="1" width="1" height="11" fill="#222"/><rect x="1" y="11" width="11" height="1" fill="#333"/><rect x="2" y="9" width="2" height="2" fill="#660066"/><rect x="4" y="7" width="1" height="4" fill="#cceeff"/><rect x="5" y="3" width="2" height="8" fill="#ee2222"/><rect x="7" y="2" width="2" height="9" fill="#33dd33"/><rect x="9" y="7" width="1.5" height="4" fill="#aaaaff"/></svg>
<div class="t" style="left:-241.2px;top:316px;width:300px;text-align:right;font-weight:bold;-webkit-text-stroke:0.25px;color:#cc0000;letter-spacing:0.8px;">8</div>
<div class="t" style="left:-174.25px;top:316px;width:300px;text-align:right;color:#cc0000;letter-spacing:0.25px;">142</div>
<div class="t" style="left:152px;top:317px;font-weight:bold;-webkit-text-stroke:0.25px;letter-spacing:-0.018px;">2.BOYKA</div>
<div class="t" style="left:204.3px;top:314px;letter-spacing:0.1px;font-size:9px;">GKD</div>
<div class="t" style="left:400px;top:316px;letter-spacing:0px;">3yde</div>
<div class="t" style="left:436px;top:316px;letter-spacing:0.25px;">52,5</div>
<div class="t" style="left:470px;top:316px;color:#000080;letter-spacing:0.25px;">-3,5</div>
<div class="t" style="left:498px;top:309px;font-weight:bold;-webkit-text-stroke:0.25px;letter-spacing:-0.4px;">A.CAN</div>
<div class="t" style="left:498px;top:323px;font-weight:bold;-webkit-text-stroke:0.25px;letter-spacing:0.05px;">İŞLEYEN</div>
<div class="t" style="left:548px;top:320px;letter-spacing:0.1px;font-size:9px;">Ap.</div>
<div class="t" style="left:313px;top:316px;width:300px;text-align:right;">6</div>
<div class="t" style="left:398.75px;top:316px;width:300px;text-align:right;letter-spacing:0.25px;">1214453324</div>
<div class="t" style="left:446.4px;top:316px;width:300px;text-align:right;font-weight:bold;-webkit-text-stroke:0.25px;color:#0a9a5e;letter-spacing:0.9px;">----3</div>
<div class="r" style="left:18px;top:336px;width:14px;height:14px;background:#f0f0f0"></div>
<div class="r" style="left:33px;top:336px;width:32px;height:14px;background:#f0f0f0"></div>
<div class="r" style="left:66px;top:336px;width:37px;height:14px;background:#f0f0f0"></div>
<div class="r" style="left:104px;top:336px;width:29px;height:14px;background:#f0f0f0"></div>
<div class="r" style="left:134px;top:336px;width:13px;height:14px;background:#f0f0f0"></div>
<div class="r" style="left:148px;top:336px;width:250px;height:14px;background:#f0f0f0"></div>
<div class="r" style="left:399px;top:336px;width:32px;height:14px;background:#f0f0f0"></div>
<div class="r" style="left:432px;top:336px;width:36px;height:14px;background:#f0f0f0"></div>
<div class="r" style="left:469px;top:336px;width:27px;height:14px;background:#f0f0f0"></div>
<div class="r" style="left:497px;top:336px;width:100px;height:14px;background:#f0f0f0"></div>
<div class="r" style="left:598px;top:336px;width:18px;height:14px;background:#f0f0f0"></div>
<div class="r" style="left:617px;top:336px;width:84px;height:14px;background:#f0f0f0"></div>
<div class="r" style="left:702px;top:336px;width:46px;height:14px;background:#f0f0f0"></div>
<div class="r" style="left:749px;top:336px;width:56px;height:14px;background:#f0f0f0"></div>
<div class="r" style="left:806px;top:336px;width:10px;height:14px;background:#f0f0f0"></div>
<svg class="ci" style="left:18px;top:336px" width="14" height="14" viewBox="0 0 14 14"><rect x="1" y="1" width="1" height="11" fill="#222"/><rect x="1" y="11" width="11" height="1" fill="#333"/><rect x="2" y="9" width="2" height="2" fill="#660066"/><rect x="4" y="7" width="1" height="4" fill="#cceeff"/><rect x="5" y="3" width="2" height="8" fill="#ee2222"/><rect x="7" y="2" width="2" height="9" fill="#33dd33"/><rect x="9" y="7" width="1.5" height="4" fill="#aaaaff"/></svg>
<div class="t" style="left:-241.2px;top:337px;width:300px;text-align:right;font-weight:bold;-webkit-text-stroke:0.25px;color:#cc0000;letter-spacing:0.8px;">24</div>
<div class="t" style="left:-174.25px;top:337px;width:300px;text-align:right;color:#cc0000;letter-spacing:0.25px;">130</div>
<div class="t" style="left:152px;top:338px;font-weight:bold;-webkit-text-stroke:0.25px;letter-spacing:0.251px;">3.SATEN</div>
<div class="t" style="left:202.4px;top:335px;letter-spacing:0.1px;font-size:9px;">G</div>
<div class="t" style="left:400px;top:337px;letter-spacing:0px;">3yde</div>
<div class="t" style="left:436px;top:337px;letter-spacing:0.25px;">53,5</div>
<div class="t" style="left:470px;top:337px;color:#000080;letter-spacing:0.25px;">-3</div>
<div class="t" style="left:498px;top:337px;font-weight:bold;-webkit-text-stroke:0.25px;letter-spacing:0.022px;">V.KAPLAN</div>
<div class="t" style="left:313px;top:337px;width:300px;text-align:right;">7</div>
<div class="t" style="left:398.75px;top:337px;width:300px;text-align:right;letter-spacing:0.25px;">4542165353</div>
<div class="t" style="left:446.4px;top:337px;width:300px;text-align:right;font-weight:bold;-webkit-text-stroke:0.25px;color:#0a9a5e;letter-spacing:0.9px;">--206</div>
<div class="r" style="left:18px;top:351px;width:14px;height:14px;background:#f0f0f0"></div>
<div class="r" style="left:33px;top:351px;width:32px;height:14px;background:#f0f0f0"></div>
<div class="r" style="left:66px;top:351px;width:37px;height:14px;background:#f0f0f0"></div>
<div class="r" style="left:104px;top:351px;width:29px;height:14px;background:#f0f0f0"></div>
<div class="r" style="left:134px;top:351px;width:13px;height:14px;background:#f0f0f0"></div>
<div class="r" style="left:148px;top:351px;width:250px;height:14px;background:#f0f0f0"></div>
<div class="r" style="left:399px;top:351px;width:32px;height:14px;background:#f0f0f0"></div>
<div class="r" style="left:432px;top:351px;width:36px;height:14px;background:#f0f0f0"></div>
<div class="r" style="left:469px;top:351px;width:27px;height:14px;background:#f0f0f0"></div>
<div class="r" style="left:497px;top:351px;width:100px;height:14px;background:#f0f0f0"></div>
<div class="r" style="left:598px;top:351px;width:18px;height:14px;background:#f0f0f0"></div>
<div class="r" style="left:617px;top:351px;width:84px;height:14px;background:#f0f0f0"></div>
<div class="r" style="left:702px;top:351px;width:46px;height:14px;background:#f0f0f0"></div>
<div class="r" style="left:749px;top:351px;width:56px;height:14px;background:#f0f0f0"></div>
<div class="r" style="left:806px;top:351px;width:10px;height:14px;background:#f0f0f0"></div>
<svg class="ci" style="left:18px;top:351px" width="14" height="14" viewBox="0 0 14 14"><rect x="1" y="1" width="1" height="11" fill="#222"/><rect x="1" y="11" width="11" height="1" fill="#333"/><rect x="2" y="9" width="2" height="2" fill="#660066"/><rect x="4" y="7" width="1" height="4" fill="#cceeff"/><rect x="5" y="3" width="2" height="8" fill="#ee2222"/><rect x="7" y="2" width="2" height="9" fill="#33dd33"/><rect x="9" y="7" width="1.5" height="4" fill="#aaaaff"/></svg>
<div class="t" style="left:-241.2px;top:352px;width:300px;text-align:right;font-weight:bold;-webkit-text-stroke:0.25px;color:#cc0000;letter-spacing:0.8px;">14</div>
<div class="t" style="left:-174.25px;top:352px;width:300px;text-align:right;color:#cc0000;letter-spacing:0.25px;">141</div>
<div class="t" style="left:152px;top:353px;font-weight:bold;-webkit-text-stroke:0.25px;letter-spacing:0.55px;">4.YİĞİTER</div>
<div class="t" style="left:400px;top:352px;letter-spacing:0px;">3yde</div>
<div class="t" style="left:436px;top:352px;letter-spacing:0.25px;">52</div>
<div class="t" style="left:470px;top:352px;color:#000080;letter-spacing:0.25px;">-6</div>
<div class="t" style="left:498px;top:352px;font-weight:bold;-webkit-text-stroke:0.25px;letter-spacing:-0.151px;">G.KOCAKAYA</div>
<div class="t" style="left:313px;top:352px;width:300px;text-align:right;">1</div>
<div class="t" style="left:398.75px;top:352px;width:300px;text-align:right;letter-spacing:0.25px;">5521783129</div>
<div class="t" style="left:446.4px;top:352px;width:300px;text-align:right;font-weight:bold;-webkit-text-stroke:0.25px;color:#0a9a5e;letter-spacing:0.9px;">58312</div>
<div class="r" style="left:18px;top:366px;width:14px;height:14px;background:#f0f0f0"></div>
<div class="r" style="left:33px;top:366px;width:32px;height:14px;background:#f0f0f0"></div>
<div class="r" style="left:66px;top:366px;width:37px;height:14px;background:#f0f0f0"></div>
<div class="r" style="left:104px;top:366px;width:29px;height:14px;background:#f0f0f0"></div>
<div class="r" style="left:134px;top:366px;width:13px;height:14px;background:#f0f0f0"></div>
<div class="r" style="left:148px;top:366px;width:250px;height:14px;background:#f0f0f0"></div>
<div class="r" style="left:399px;top:366px;width:32px;height:14px;background:#f0f0f0"></div>
<div class="r" style="left:432px;top:366px;width:36px;height:14px;background:#f0f0f0"></div>
<div class="r" style="left:469px;top:366px;width:27px;height:14px;background:#f0f0f0"></div>
<div class="r" style="left:497px;top:366px;width:100px;height:14px;background:#f0f0f0"></div>
<div class="r" style="left:598px;top:366px;width:18px;height:14px;background:#f0f0f0"></div>
<div class="r" style="left:617px;top:366px;width:84px;height:14px;background:#f0f0f0"></div>
<div class="r" style="left:702px;top:366px;width:46px;height:14px;background:#f0f0f0"></div>
<div class="r" style="left:749px;top:366px;width:56px;height:14px;background:#f0f0f0"></div>
<div class="r" style="left:806px;top:366px;width:10px;height:14px;background:#f0f0f0"></div>
<svg class="ci" style="left:18px;top:366px" width="14" height="14" viewBox="0 0 14 14"><rect x="1" y="1" width="1" height="11" fill="#222"/><rect x="1" y="11" width="11" height="1" fill="#333"/><rect x="2" y="9" width="2" height="2" fill="#660066"/><rect x="4" y="7" width="1" height="4" fill="#cceeff"/><rect x="5" y="3" width="2" height="8" fill="#ee2222"/><rect x="7" y="2" width="2" height="9" fill="#33dd33"/><rect x="9" y="7" width="1.5" height="4" fill="#aaaaff"/></svg>
<div class="t" style="left:-241.2px;top:367px;width:300px;text-align:right;font-weight:bold;-webkit-text-stroke:0.25px;color:#cc0000;letter-spacing:0.8px;">14</div>
<div class="t" style="left:-174.25px;top:367px;width:300px;text-align:right;color:#cc0000;letter-spacing:0.25px;">98</div>
<div class="t" style="left:152px;top:368px;font-weight:bold;-webkit-text-stroke:0.25px;letter-spacing:0.233px;">5.CANLI HEDEF</div>
<div class="t" style="left:243.3px;top:365px;letter-spacing:0.1px;font-size:9px;">K</div>
<div class="t" style="left:400px;top:367px;letter-spacing:0px;">3yde</div>
<div class="t" style="left:436px;top:367px;letter-spacing:0.25px;">51,5</div>
<div class="t" style="left:470px;top:367px;color:#000080;letter-spacing:0.25px;">-6,5</div>
<div class="t" style="left:498px;top:367px;font-weight:bold;-webkit-text-stroke:0.25px;letter-spacing:-0.279px;">GÖKHAN GÖKÇE</div>
<div class="t" style="left:313px;top:367px;width:300px;text-align:right;">2</div>
<div class="t" style="left:398.75px;top:367px;width:300px;text-align:right;letter-spacing:0.25px;">5136145446</div>
<div class="t" style="left:446.4px;top:367px;width:300px;text-align:right;font-weight:bold;-webkit-text-stroke:0.25px;color:#0a9a5e;letter-spacing:0.9px;">--545</div>
<div class="r" style="left:18px;top:381px;width:14px;height:14px;background:#f0f0f0"></div>
<div class="r" style="left:33px;top:381px;width:32px;height:14px;background:#f0f0f0"></div>
<div class="r" style="left:66px;top:381px;width:37px;height:14px;background:#f0f0f0"></div>
<div class="r" style="left:104px;top:381px;width:29px;height:14px;background:#f0f0f0"></div>
<div class="r" style="left:134px;top:381px;width:13px;height:14px;background:#f0f0f0"></div>
<div class="r" style="left:148px;top:381px;width:250px;height:14px;background:#f0f0f0"></div>
<div class="r" style="left:399px;top:381px;width:32px;height:14px;background:#f0f0f0"></div>
<div class="r" style="left:432px;top:381px;width:36px;height:14px;background:#f0f0f0"></div>
<div class="r" style="left:469px;top:381px;width:27px;height:14px;background:#f0f0f0"></div>
<div class="r" style="left:497px;top:381px;width:100px;height:14px;background:#f0f0f0"></div>
<div class="r" style="left:598px;top:381px;width:18px;height:14px;background:#f0f0f0"></div>
<div class="r" style="left:617px;top:381px;width:84px;height:14px;background:#f0f0f0"></div>
<div class="r" style="left:702px;top:381px;width:46px;height:14px;background:#f0f0f0"></div>
<div class="r" style="left:749px;top:381px;width:56px;height:14px;background:#f0f0f0"></div>
<div class="r" style="left:806px;top:381px;width:10px;height:14px;background:#f0f0f0"></div>
<svg class="ci" style="left:18px;top:381px" width="14" height="14" viewBox="0 0 14 14"><rect x="1" y="1" width="1" height="11" fill="#222"/><rect x="1" y="11" width="11" height="1" fill="#333"/><rect x="2" y="9" width="2" height="2" fill="#660066"/><rect x="4" y="7" width="1" height="4" fill="#cceeff"/><rect x="5" y="3" width="2" height="8" fill="#ee2222"/><rect x="7" y="2" width="2" height="9" fill="#33dd33"/><rect x="9" y="7" width="1.5" height="4" fill="#aaaaff"/></svg>
<div class="t" style="left:-241.2px;top:382px;width:300px;text-align:right;font-weight:bold;-webkit-text-stroke:0.25px;color:#cc0000;letter-spacing:0.8px;">16</div>
<div class="t" style="left:-174.25px;top:382px;width:300px;text-align:right;color:#cc0000;letter-spacing:0.25px;">195</div>
<div class="t" style="left:152px;top:383px;font-weight:bold;-webkit-text-stroke:0.25px;letter-spacing:-0.03px;">6.EXCHANGER</div>
<div class="t" style="left:237.3px;top:380px;letter-spacing:0.1px;font-size:9px;">K</div>
<div class="t" style="left:400px;top:382px;letter-spacing:0px;">3yde</div>
<div class="t" style="left:436px;top:382px;letter-spacing:0.25px;">51,5</div>
<div class="t" style="left:470px;top:382px;color:#000080;letter-spacing:0.25px;">-3,5</div>
<div class="t" style="left:498px;top:382px;font-weight:bold;-webkit-text-stroke:0.25px;letter-spacing:-0.18px;">F.YÜKSEL</div>
<div class="t" style="left:313px;top:382px;width:300px;text-align:right;">3</div>
<div class="t" style="left:398.75px;top:382px;width:300px;text-align:right;letter-spacing:0.25px;">----173222</div>
<div class="t" style="left:446.4px;top:382px;width:300px;text-align:right;font-weight:bold;-webkit-text-stroke:0.25px;color:#0a9a5e;letter-spacing:0.9px;">--322</div>
<div class="r" style="left:18px;top:396px;width:14px;height:14px;background:#f0f0f0"></div>
<div class="r" style="left:33px;top:396px;width:32px;height:14px;background:#f0f0f0"></div>
<div class="r" style="left:66px;top:396px;width:37px;height:14px;background:#f0f0f0"></div>
<div class="r" style="left:104px;top:396px;width:29px;height:14px;background:#f0f0f0"></div>
<div class="r" style="left:134px;top:396px;width:13px;height:14px;background:#f0f0f0"></div>
<div class="r" style="left:148px;top:396px;width:250px;height:14px;background:#f0f0f0"></div>
<div class="r" style="left:399px;top:396px;width:32px;height:14px;background:#f0f0f0"></div>
<div class="r" style="left:432px;top:396px;width:36px;height:14px;background:#f0f0f0"></div>
<div class="r" style="left:469px;top:396px;width:27px;height:14px;background:#f0f0f0"></div>
<div class="r" style="left:497px;top:396px;width:100px;height:14px;background:#f0f0f0"></div>
<div class="r" style="left:598px;top:396px;width:18px;height:14px;background:#f0f0f0"></div>
<div class="r" style="left:617px;top:396px;width:84px;height:14px;background:#f0f0f0"></div>
<div class="r" style="left:702px;top:396px;width:46px;height:14px;background:#f0f0f0"></div>
<div class="r" style="left:749px;top:396px;width:56px;height:14px;background:#f0f0f0"></div>
<div class="r" style="left:806px;top:396px;width:10px;height:14px;background:#f0f0f0"></div>
<svg class="ci" style="left:18px;top:396px" width="14" height="14" viewBox="0 0 14 14"><rect x="1" y="1" width="1" height="11" fill="#222"/><rect x="1" y="11" width="11" height="1" fill="#333"/><rect x="2" y="9" width="2" height="2" fill="#660066"/><rect x="4" y="7" width="1" height="4" fill="#cceeff"/><rect x="5" y="3" width="2" height="8" fill="#ee2222"/><rect x="7" y="2" width="2" height="9" fill="#33dd33"/><rect x="9" y="7" width="1.5" height="4" fill="#aaaaff"/></svg>
<div class="t" style="left:-241.2px;top:397px;width:300px;text-align:right;font-weight:bold;-webkit-text-stroke:0.25px;color:#cc0000;letter-spacing:0.8px;">8</div>
<div class="t" style="left:-174.25px;top:397px;width:300px;text-align:right;color:#cc0000;letter-spacing:0.25px;">133</div>
<div class="t" style="left:152px;top:398px;font-weight:bold;-webkit-text-stroke:0.25px;letter-spacing:0.633px;">7.GOLDINIADIS</div>
<div class="t" style="left:400px;top:397px;letter-spacing:0px;">3yde</div>
<div class="t" style="left:436px;top:397px;letter-spacing:0.25px;">50</div>
<div class="t" style="left:470px;top:397px;color:#000080;letter-spacing:0.25px;">-5</div>
<div class="t" style="left:498px;top:397px;font-weight:bold;-webkit-text-stroke:0.25px;letter-spacing:-0.175px;">B.AVERBAK</div>
<div class="t" style="left:313px;top:397px;width:300px;text-align:right;">5</div>
<div class="t" style="left:398.75px;top:397px;width:300px;text-align:right;letter-spacing:0.25px;">2552416634</div>
<div class="t" style="left:446.4px;top:397px;width:300px;text-align:right;font-weight:bold;-webkit-text-stroke:0.25px;color:#0a9a5e;letter-spacing:0.9px;">-4164</div>
<div class="icons" style="top:411px"><svg width="834" height="26" viewBox="0 202 834 26" style="left:0;top:0"><path fill-rule="evenodd" fill="#737373" d="M458.2,204.2 H467.5 C472.6,204.2 475.5,207.8 475.5,213 C475.5,218.2 472.6,221.7 467.5,221.7 H458.2 Z M463,208 H466.6 C468.4,208 469.4,209.8 469.4,213 C469.4,216.2 468.4,218 466.6,218 H463 Z"/><path d="M472,205.6 C474.6,207.2 475.6,210 475.6,213 C475.6,216 474.6,218.8 472,220.4" stroke="#222" stroke-width="0.7" fill="none"/></svg>
<svg width="834" height="26" viewBox="0 202 834 26" style="left:0;top:0">
<defs>
<linearGradient id="gb" x1="0" y1="0" x2="1" y2="1"><stop offset="0" stop-color="#444"/><stop offset="0.5" stop-color="#bbb"/><stop offset="1" stop-color="#555"/></linearGradient>
<linearGradient id="gb2" x1="0" y1="0" x2="0" y2="1"><stop offset="0" stop-color="#666"/><stop offset="0.45" stop-color="#e6e6e6"/><stop offset="1" stop-color="#999"/></linearGradient>
<radialGradient id="gs" cx="0.35" cy="0.3" r="0.8"><stop offset="0" stop-color="#fff"/><stop offset="1" stop-color="#999"/></radialGradient>
<linearGradient id="gh2" x1="0" y1="0" x2="1" y2="0"><stop offset="0" stop-color="#bbb"/><stop offset="1" stop-color="#555"/></linearGradient>
<linearGradient id="gh3" x1="0" y1="0" x2="1" y2="0"><stop offset="0" stop-color="#e8e8e8"/><stop offset="0.5" stop-color="#aaa"/><stop offset="1" stop-color="#666"/></linearGradient>
<linearGradient id="gh" x1="0" y1="0" x2="1" y2="0"><stop offset="0" stop-color="#eee"/><stop offset="1" stop-color="#666"/></linearGradient>
</defs>
<path d="M495.8,208 A5.7,6.3 0 1 0 497.1,213.6" stroke="#737373" stroke-width="4.1" fill="none" stroke-linecap="round"/><path d="M491.2,212.9 H498.9" stroke="#737373" stroke-width="3.2" fill="none"/>
<g>
<ellipse cx="514.5" cy="206.5" rx="3.6" ry="1.6" fill="#f4f4f4" stroke="#777" stroke-width="0.9"/>
<path d="M511,208.5 L518,217.5 M518,208.5 L511,217.5" stroke="#333" stroke-width="0.9"/>
<path d="M511.2,218 L514.5,214.6 L517.8,218 Z" fill="#000"/>
<rect x="518.5" y="204.5" width="8" height="17" fill="#fff" stroke="#222" stroke-width="1"/>
<rect x="520" y="206" width="5.2" height="3.4" fill="#ccc" stroke="#333" stroke-width="0.8"/>
<g fill="#222"><rect x="520" y="211.5" width="1.8" height="1.8"/><rect x="523.2" y="211.5" width="1.8" height="4.5"/><rect x="520" y="214.5" width="1.8" height="1.8"/><rect x="520" y="217.6" width="1.8" height="1.8"/><rect x="523.2" y="217.6" width="1.8" height="1.8"/><rect x="517" y="218.6" width="1.4" height="1.4"/><rect x="512" y="220" width="1.4" height="1.4"/></g>
<rect x="513" y="221" width="13.5" height="1" fill="#333"/>
</g>
<g fill="#999">
<path d="M538.4,205 L539.5,206.5 C543,206.8 545.5,208.6 546.2,210.6 L541.6,214.6 L539.6,213.2 L535,216 C534.6,213 536.4,209 538.4,205 Z"/>
<path d="M537.5,219.6 L543.2,214.2 L545.2,216.6 L550,212.4 L550,219.6 Z"/>
</g>
<path d="M543.8,214.4 L550.2,208" stroke="#000" stroke-width="2.4"/>
<path d="M546.5,206.7 L552.2,206.7 L552.2,212.2 Z" fill="#000"/>
<path d="M569.5,205 V222 M573.3,208.4 C573,207.2 571.6,206.8 569.5,206.8 C567,206.8 565.6,208 565.6,209.7 C565.6,211.6 567.8,212.4 570,212.9 C572.6,213.5 574,214.7 574,216.6 C574,218.6 572.2,219.3 569.5,219.3 C567.2,219.3 565.8,218.6 565.4,217.3" stroke="#8a8a8a" stroke-width="1.1" fill="none"/>
<g transform="rotate(35 596.5 213)">
<rect x="589.5" y="215.8" width="12" height="5.6" rx="2" fill="url(#gb2)" stroke="#555" stroke-width="0.6"/>
<rect x="592.5" y="204.6" width="12" height="5.6" rx="2" fill="url(#gb2)" stroke="#555" stroke-width="0.6"/>
<rect x="595" y="210.2" width="3" height="5.6" fill="#777"/>
<ellipse cx="600" cy="218.6" rx="1.7" ry="2.8" fill="#f4f4f4" stroke="#555" stroke-width="0.6"/>
<ellipse cx="603.5" cy="207.4" rx="1.7" ry="2.8" fill="#f4f4f4" stroke="#555" stroke-width="0.6"/>
<rect x="588.2" y="216.6" width="2" height="4" fill="#444"/>
<rect x="591.2" y="205.4" width="2" height="4" fill="#444"/>
</g>
<g>
<ellipse cx="622.4" cy="206.2" rx="4.9" ry="1.8" fill="#e8e8e8" stroke="#666" stroke-width="1"/>
<path d="M618,207.8 C618,211 621.6,212 622.4,213 C623.2,212 626.8,211 626.8,207.8 M618,218.4 C618,215 621.6,214 622.4,213 C623.2,214 626.8,215 626.8,218.4" stroke="#333" stroke-width="0.9" fill="none"/>
<path d="M617.6,219.5 Q622.4,214.5 627.2,219.5 Q622.4,222.4 617.6,219.5 Z" fill="#888" stroke="#555" stroke-width="0.6"/>
</g>
<path d="M637,204 V221.6 H659.6" stroke="#000" stroke-width="1.6" fill="none"/>
<polyline points="638,207 642,210.5 648,210.5 652,207 655,209 659,213.5" stroke="#aaa" stroke-width="1" fill="none"/>
<polyline points="638,216 643,212 647,215 651,213.5 655,211.5 659,211" stroke="#222" stroke-width="0.9" fill="none"/>
<polyline points="638,213.5 643,219 647,214 650,215 654,219 658,215" stroke="#666" stroke-width="0.9" fill="none"/>
<rect x="671" y="204.6" width="5" height="2.6" rx="1.2" fill="#555"/>
<circle cx="673.5" cy="214.6" r="7.1" fill="url(#gs)" stroke="#111" stroke-width="1.2"/>
<polyline points="670.8,211.8 673.5,214.6 677.2,210.8" stroke="#111" stroke-width="1" fill="none"/>
<path d="M673.5,208.6 V210.2 M673.5,219 V220.6 M667.6,214.6 H669.2 M677.8,214.6 H679.4" stroke="#555" stroke-width="1"/>
<rect x="692.5" y="204.5" width="14" height="17" rx="1.5" fill="#fafafa" stroke="#333" stroke-width="1"/>
<rect x="694.6" y="206.4" width="9.8" height="3.6" fill="#ddd" stroke="#333" stroke-width="0.9"/>
<g fill="#222"><rect x="694.5" y="212" width="2" height="2"/><rect x="697.6" y="212" width="2" height="2"/><rect x="700.7" y="212" width="2" height="2"/><rect x="703.6" y="212" width="2" height="5"/>
<rect x="694.5" y="215" width="2" height="2"/><rect x="697.6" y="215" width="2" height="2"/><rect x="700.7" y="215" width="2" height="2"/>
<rect x="694.5" y="218" width="2" height="2"/><rect x="697.6" y="218" width="2" height="2"/><rect x="700.7" y="218" width="2" height="2"/><rect x="703.6" y="218" width="2" height="2"/></g>
<g fill="#c0c0c0">
<path d="M719.3,205 L720.3,206.6 C722,206.8 723.6,207.4 725,208.4 L723,214 L720.6,214.4 L716.4,215.6 C715.4,215.6 715,214.6 715.4,213.8 C716.8,210.6 718.4,208 719.3,205 Z"/>
<path d="M719,219.8 L719.6,217.2 C720.2,215.8 722,215.2 724,215 L725.6,219.8 Z"/>
</g>
<path d="M725.4,205 L726.4,206.4 C731.6,207.2 736.4,211 737,216 V219.8 H725 L724.4,215 C723.6,214.9 723,214.8 722.4,214.6 C722,212 723.6,208.6 725.4,205 Z" fill="#999"/>
<path d="M724.8,218.6 L728.6,213.4" stroke="#c4c4c4" stroke-width="1.1"/>
<g>
<ellipse cx="745.4" cy="208.4" rx="2.1" ry="3.1" fill="#c8c8c8"/>
<path d="M741,221 V213.6 C741,212.6 741.8,212 742.8,212 H748.5 V221 Z" fill="#c8c8c8"/>
<ellipse cx="752" cy="208.4" rx="2.1" ry="3.1" fill="#a0a0a0"/>
<path d="M747.6,221 V212 H755.5 V221 Z" fill="#a0a0a0"/>
<ellipse cx="758.4" cy="208.4" rx="2.2" ry="3.1" fill="#858585"/>
<path d="M754.4,221 V212 H761.8 C763,212 763.8,212.8 763.8,214 V221 Z" fill="#858585"/>
<path d="M742.2,216.4 V221 M749,216.4 V221 M755.6,216.4 V221 M762.4,216.4 V221" stroke="#f4f4f4" stroke-width="0.8"/>
</g>
<g>
<path d="M767,205 C769,204 772,204.6 774,204.4 C775.5,204.3 777,204 778,204.2 L776.6,209.6 L777.2,214.6 C775,214.8 772,215.2 770,215 C768.5,214.9 767,215 765.6,215.4 C765.4,212 766,208 767,205 Z" fill="#fff" stroke="#444" stroke-width="0.7"/>
<g fill="#222"><rect x="770.6" y="205.6" width="1.8" height="1.8"/><rect x="774" y="205.4" width="1.8" height="1.8"/><rect x="772.3" y="207.5" width="1.8" height="1.8"/><rect x="768.8" y="207.6" width="1.6" height="1.8"/><rect x="770.6" y="209.5" width="1.8" height="1.8"/><rect x="774" y="209.4" width="1.8" height="1.8"/><rect x="772.3" y="211.5" width="1.8" height="1.8"/><rect x="768.8" y="211.6" width="1.6" height="1.8"/><rect x="770.6" y="213.2" width="1.8" height="1.4"/><rect x="774" y="213.2" width="1.8" height="1.4"/></g>
<path d="M778.6,205.4 C779.4,204.4 784,204 787,204.4 L788.2,211 L791.4,212.4 L791,213.4 L779.6,213.4 Z" fill="url(#gh3)" stroke="#666" stroke-width="0.5"/>
<path d="M778,212.4 H788.6 L791.8,212.8 L790.8,214 H778 Z" fill="#3a3a3a"/>
<path d="M770.6,222 C771,219.4 773,217.8 776,216.4 C778,215.4 781,214.6 783.4,215 C786,215.6 788,217.6 787.8,219.6 C786,221.8 780,222.8 770.6,222 Z" fill="#e0e0e0" stroke="#222" stroke-width="0.9"/>
<path d="M775.6,219.8 L779.8,216.2 M779.4,221.2 L784.2,217.2 M783,220.6 L786.6,218.6" stroke="#444" stroke-width="0.9"/>
<circle cx="805" cy="213.1" r="8.6" fill="none" stroke="#555" stroke-width="1"/>
<g fill="#555"><circle cx="805.4" cy="207.4" r="1"/><rect x="804.2" y="210.2" width="2.3" height="6.4"/><rect x="802.8" y="210.2" width="1.6" height="1"/><rect x="802" y="216.4" width="7" height="1.3"/></g>
</svg>
</div>
<div class="r" style="left:18px;top:436px;width:798px;height:1px;background:#6699cc"></div>
<div class="t" style="left:19px;top:476px;font-weight:bold;-webkit-text-stroke:0.25px;letter-spacing:0.2px;">3.Koşu</div>
<div class="t" style="left:67px;top:476px;letter-spacing:0.4px;">Saat: 15:00</div>
<div class="t" style="left:138px;top:476px;color:#0000ee;letter-spacing:0.15px;"><u>Kısa Vadeli&nbsp; 6</u></div>
<div class="t" style="left:210px;top:476px;letter-spacing:-0.1px;">/DHÖW</div>
<div class="t" style="left:259px;top:476px;color:#0000ee;letter-spacing:-0.304px;"><u>4 ve YUKARI ARAPLAR</u></div>
<div class="t" style="left:441px;top:476px;letter-spacing:0.125px;">52.500 TL</div>
<div class="t" style="left:400.5px;top:476px;width:300px;text-align:right;font-weight:bold;-webkit-text-stroke:0.25px;color:#0a9a5e;letter-spacing:0.5px;">1400 Çim</div>
<div class="r" style="left:18px;top:490px;width:14px;height:12px;background:#6699cc;overflow:hidden"></div>
<div class="r" style="left:33px;top:490px;width:32px;height:12px;background:#6699cc;overflow:hidden"><div class="t" style="top:0;left:1px;font-weight:bold;-webkit-text-stroke:0.25px;color:#fff;letter-spacing:0.5px">Dozaj</div></div>
<div class="r" style="left:66px;top:490px;width:37px;height:12px;background:#6699cc;overflow:hidden"><div class="t" style="top:0;left:1px;font-weight:bold;-webkit-text-stroke:0.25px;color:#fff;letter-spacing:0.5px">Bülten</div></div>
<div class="r" style="left:104px;top:490px;width:29px;height:12px;background:#6699cc;overflow:hidden"><div class="t" style="top:0;left:1px;font-weight:bold;-webkit-text-stroke:0.25px;color:#fff;letter-spacing:0.5px">Puan</div></div>
<div class="r" style="left:134px;top:490px;width:13px;height:12px;background:#6699cc;overflow:hidden"></div>
<div class="r" style="left:148px;top:490px;width:250px;height:12px;background:#6699cc;overflow:hidden"><div class="t" style="top:0;left:4px;font-weight:bold;-webkit-text-stroke:0.25px;color:#fff;letter-spacing:0.5px">At İsmi</div></div>
<div class="r" style="left:399px;top:490px;width:32px;height:12px;background:#6699cc;overflow:hidden"></div>
<div class="r" style="left:432px;top:490px;width:36px;height:12px;background:#6699cc;overflow:hidden"><div class="t" style="top:0;left:-50px;width:136px;text-align:center;font-weight:bold;-webkit-text-stroke:0.25px;color:#fff;letter-spacing:0.5px">Kilo</div></div>
<div class="r" style="left:469px;top:490px;width:26px;height:12px;background:#6699cc;overflow:hidden"><div class="t" style="top:0;left:1px;font-weight:bold;-webkit-text-stroke:0.25px;color:#fff;letter-spacing:0.5px">+ -</div></div>
<div class="r" style="left:496px;top:490px;width:96px;height:12px;background:#6699cc;overflow:hidden"><div class="t" style="top:0;left:1px;font-weight:bold;-webkit-text-stroke:0.25px;color:#fff;letter-spacing:0.5px">Jokey</div></div>
<div class="r" style="left:593px;top:490px;width:23px;height:12px;background:#6699cc;overflow:hidden"><div class="t" style="top:0;right:0px;font-weight:bold;-webkit-text-stroke:0.25px;color:#fff;letter-spacing:0.5px">St</div></div>
<div class="r" style="left:617px;top:490px;width:84px;height:12px;background:#6699cc;overflow:hidden"><div class="t" style="top:0;right:-2px;font-weight:bold;-webkit-text-stroke:0.25px;color:#fff;letter-spacing:0.5px">Son 10 yarışı</div></div>
<div class="r" style="left:702px;top:490px;width:46px;height:12px;background:#6699cc;overflow:hidden"><div class="t" style="top:0;right:1px;font-weight:bold;-webkit-text-stroke:0.25px;color:#fff;letter-spacing:0.5px">5 Çim</div></div>
<div class="r" style="left:749px;top:490px;width:56px;height:12px;background:#6699cc;overflow:hidden"><div class="t" style="top:0;left:-50px;width:156px;text-align:center;font-weight:bold;-webkit-text-stroke:0.25px;color:#fff;letter-spacing:0.5px">400m G.</div></div>
<div class="r" style="left:806px;top:490px;width:10px;height:12px;background:#6699cc;overflow:hidden"><div class="t" style="top:0;left:3px;font-weight:bold;-webkit-text-stroke:0.25px;color:#fff;letter-spacing:0.5px">S</div></div>
<div class="r" style="left:18px;top:503px;width:14px;height:14px;background:#f0f0f0"></div>
<div class="r" style="left:33px;top:503px;width:32px;height:14px;background:#f0f0f0"></div>
<div class="r" style="left:66px;top:503px;width:37px;height:14px;background:#f0f0f0"></div>
<div class="r" style="left:104px;top:503px;width:29px;height:14px;background:#f0f0f0"></div>
<div class="r" style="left:134px;top:503px;width:13px;height:14px;background:#f0f0f0"></div>
<div class="r" style="left:148px;top:503px;width:250px;height:14px;background:#f0f0f0"></div>
<div class="r" style="left:399px;top:503px;width:32px;height:14px;background:#f0f0f0"></div>
<div class="r" style="left:432px;top:503px;width:36px;height:14px;background:#f0f0f0"></div>
<div class="r" style="left:469px;top:503px;width:26px;height:14px;background:#f0f0f0"></div>
<div class="r" style="left:496px;top:503px;width:96px;height:14px;background:#f0f0f0"></div>
<div class="r" style="left:593px;top:503px;width:23px;height:14px;background:#f0f0f0"></div>
<div class="r" style="left:617px;top:503px;width:84px;height:14px;background:#f0f0f0"></div>
<div class="r" style="left:702px;top:503px;width:46px;height:14px;background:#f0f0f0"></div>
<div class="r" style="left:749px;top:503px;width:56px;height:14px;background:#f0f0f0"></div>
<div class="r" style="left:806px;top:503px;width:10px;height:14px;background:#f0f0f0"></div>
<svg class="ci" style="left:18px;top:503px" width="14" height="14" viewBox="0 0 14 14"><rect x="1" y="1" width="1" height="11" fill="#222"/><rect x="1" y="11" width="11" height="1" fill="#333"/><rect x="2" y="9" width="2" height="2" fill="#660066"/><rect x="4" y="7" width="1" height="4" fill="#cceeff"/><rect x="5" y="3" width="2" height="8" fill="#ee2222"/><rect x="7" y="2" width="2" height="9" fill="#33dd33"/><rect x="9" y="7" width="1.5" height="4" fill="#aaaaff"/></svg>
<div class="t" style="left:-174.25px;top:504px;width:300px;text-align:right;color:#cc0000;letter-spacing:0.25px;">170</div>
<div class="t" style="left:152px;top:505px;font-weight:bold;-webkit-text-stroke:0.25px;letter-spacing:0.357px;">1.ALBURAK KIZI</div>
<div class="t" style="left:400px;top:504px;letter-spacing:0px;">6yad</div>
<div class="t" style="left:436px;top:504px;letter-spacing:0.25px;">59,5</div>
<div class="t" style="left:497px;top:504px;font-weight:bold;-webkit-text-stroke:0.25px;letter-spacing:0.217px;">U.POLAT</div>
<div class="t" style="left:313px;top:504px;width:300px;text-align:right;">5</div>
<div class="t" style="left:398.75px;top:504px;width:300px;text-align:right;letter-spacing:0.25px;">5222122414</div>
<div class="t" style="left:446.4px;top:504px;width:300px;text-align:right;font-weight:bold;-webkit-text-stroke:0.25px;color:#0a9a5e;letter-spacing:0.9px;">12241</div>
<div class="r" style="left:18px;top:518px;width:14px;height:14px;background:#f0f0f0"></div>
<div class="r" style="left:33px;top:518px;width:32px;height:14px;background:#f0f0f0"></div>
<div class="r" style="left:66px;top:518px;width:37px;height:14px;background:#f0f0f0"></div>
<div class="r" style="left:104px;top:518px;width:29px;height:14px;background:#f0f0f0"></div>
<div class="r" style="left:134px;top:518px;width:13px;height:14px;background:#f0f0f0"></div>
<div class="r" style="left:148px;top:518px;width:250px;height:14px;background:#f0f0f0"></div>
<div class="r" style="left:399px;top:518px;width:32px;height:14px;background:#f0f0f0"></div>
<div class="r" style="left:432px;top:518px;width:36px;height:14px;background:#f0f0f0"></div>
<div class="r" style="left:469px;top:518px;width:26px;height:14px;background:#f0f0f0"></div>
<div class="r" style="left:496px;top:518px;width:96px;height:14px;background:#f0f0f0"></div>
<div class="r" style="left:593px;top:518px;width:23px;height:14px;background:#f0f0f0"></div>
<div class="r" style="left:617px;top:518px;width:84px;height:14px;background:#f0f0f0"></div>
<div class="r" style="left:702px;top:518px;width:46px;height:14px;background:#f0f0f0"></div>
<div class="r" style="left:749px;top:518px;width:56px;height:14px;background:#f0f0f0"></div>
<div class="r" style="left:806px;top:518px;width:10px;height:14px;background:#f0f0f0"></div>
<svg class="ci" style="left:18px;top:518px" width="14" height="14" viewBox="0 0 14 14"><rect x="1" y="1" width="1" height="11" fill="#222"/><rect x="1" y="11" width="11" height="1" fill="#333"/><rect x="2" y="9" width="2" height="2" fill="#660066"/><rect x="4" y="7" width="1" height="4" fill="#cceeff"/><rect x="5" y="3" width="2" height="8" fill="#ee2222"/><rect x="7" y="2" width="2" height="9" fill="#33dd33"/><rect x="9" y="7" width="1.5" height="4" fill="#aaaaff"/></svg>
<div class="t" style="left:-174.25px;top:519px;width:300px;text-align:right;color:#cc0000;letter-spacing:0.25px;">141</div>
<div class="t" style="left:152px;top:520px;font-weight:bold;-webkit-text-stroke:0.25px;letter-spacing:-0.172px;">2.BERRAGÜL</div>
<div class="t" style="left:400px;top:519px;letter-spacing:0px;">6ydd</div>
<div class="t" style="left:436px;top:519px;letter-spacing:0.25px;">59,5</div>
<div class="t" style="left:470px;top:519px;color:#000080;letter-spacing:0.25px;">-2</div>
<div class="t" style="left:497px;top:519px;font-weight:bold;-webkit-text-stroke:0.25px;letter-spacing:-0.062px;">A.KURŞUN</div>
<div class="t" style="left:313px;top:519px;width:300px;text-align:right;">2</div>
<div class="t" style="left:398.75px;top:519px;width:300px;text-align:right;letter-spacing:0.25px;">2112521075</div>
<div class="t" style="left:446.4px;top:519px;width:300px;text-align:right;font-weight:bold;-webkit-text-stroke:0.25px;color:#0a9a5e;letter-spacing:0.9px;">52107</div>
<div class="r" style="left:18px;top:533px;width:14px;height:14px;background:#f0f0f0"></div>
<div class="r" style="left:33px;top:533px;width:32px;height:14px;background:#f0f0f0"></div>
<div class="r" style="left:66px;top:533px;width:37px;height:14px;background:#f0f0f0"></div>
<div class="r" style="left:104px;top:533px;width:29px;height:14px;background:#f0f0f0"></div>
<div class="r" style="left:134px;top:533px;width:13px;height:14px;background:#f0f0f0"></div>
<div class="r" style="left:148px;top:533px;width:250px;height:14px;background:#f0f0f0"></div>
<div class="r" style="left:399px;top:533px;width:32px;height:14px;background:#f0f0f0"></div>
<div class="r" style="left:432px;top:533px;width:36px;height:14px;background:#f0f0f0"></div>
<div class="r" style="left:469px;top:533px;width:26px;height:14px;background:#f0f0f0"></div>
<div class="r" style="left:496px;top:533px;width:96px;height:14px;background:#f0f0f0"></div>
<div class="r" style="left:593px;top:533px;width:23px;height:14px;background:#f0f0f0"></div>
<div class="r" style="left:617px;top:533px;width:84px;height:14px;background:#f0f0f0"></div>
<div class="r" style="left:702px;top:533px;width:46px;height:14px;background:#f0f0f0"></div>
<div class="r" style="left:749px;top:533px;width:56px;height:14px;background:#f0f0f0"></div>
<div class="r" style="left:806px;top:533px;width:10px;height:14px;background:#f0f0f0"></div>
<svg class="ci" style="left:18px;top:533px" width="14" height="14" viewBox="0 0 14 14"><rect x="1" y="1" width="1" height="11" fill="#222"/><rect x="1" y="11" width="11" height="1" fill="#333"/><rect x="2" y="9" width="2" height="2" fill="#660066"/><rect x="4" y="7" width="1" height="4" fill="#cceeff"/><rect x="5" y="3" width="2" height="8" fill="#ee2222"/><rect x="7" y="2" width="2" height="9" fill="#33dd33"/><rect x="9" y="7" width="1.5" height="4" fill="#aaaaff"/></svg>
<div class="t" style="left:-174.25px;top:534px;width:300px;text-align:right;color:#cc0000;letter-spacing:0.25px;">227</div>
<div class="t" style="left:152px;top:535px;font-weight:bold;-webkit-text-stroke:0.25px;letter-spacing:0.494px;">3.ELANİLİM</div>
<div class="t" style="left:221.6px;top:532px;letter-spacing:0.1px;font-size:9px;">G D</div>
<div class="t" style="left:400px;top:534px;letter-spacing:0px;">4yad</div>
<div class="t" style="left:436px;top:534px;letter-spacing:0.25px;">58</div>
<div class="t" style="left:497px;top:534px;font-weight:bold;-webkit-text-stroke:0.25px;letter-spacing:-0.07px;">AHMET ÇELİK</div>
<div class="t" style="left:313px;top:534px;width:300px;text-align:right;">3</div>
<div class="t" style="left:398.75px;top:534px;width:300px;text-align:right;letter-spacing:0.25px;">3427241032</div>
<div class="t" style="left:446.4px;top:534px;width:300px;text-align:right;font-weight:bold;-webkit-text-stroke:0.25px;color:#0a9a5e;letter-spacing:0.9px;">24103</div>
<div class="r" style="left:18px;top:548px;width:14px;height:14px;background:#f0f0f0"></div>
<div class="r" style="left:33px;top:548px;width:32px;height:14px;background:#f0f0f0"></div>
<div class="r" style="left:66px;top:548px;width:37px;height:14px;background:#f0f0f0"></div>
<div class="r" style="left:104px;top:548px;width:29px;height:14px;background:#f0f0f0"></div>
<div class="r" style="left:134px;top:548px;width:13px;height:14px;background:#f0f0f0"></div>
<div class="r" style="left:148px;top:548px;width:250px;height:14px;background:#f0f0f0"></div>
<div class="r" style="left:399px;top:548px;width:32px;height:14px;background:#f0f0f0"></div>
<div class="r" style="left:432px;top:548px;width:36px;height:14px;background:#f0f0f0"></div>
<div class="r" style="left:469px;top:548px;width:26px;height:14px;background:#f0f0f0"></div>
<div class="r" style="left:496px;top:548px;width:96px;height:14px;background:#f0f0f0"></div>
<div class="r" style="left:593px;top:548px;width:23px;height:14px;background:#f0f0f0"></div>
<div class="r" style="left:617px;top:548px;width:84px;height:14px;background:#f0f0f0"></div>
<div class="r" style="left:702px;top:548px;width:46px;height:14px;background:#f0f0f0"></div>
<div class="r" style="left:749px;top:548px;width:56px;height:14px;background:#f0f0f0"></div>
<div class="r" style="left:806px;top:548px;width:10px;height:14px;background:#f0f0f0"></div>
<svg class="ci" style="left:18px;top:548px" width="14" height="14" viewBox="0 0 14 14"><rect x="1" y="1" width="1" height="11" fill="#222"/><rect x="1" y="11" width="11" height="1" fill="#333"/><rect x="2" y="9" width="2" height="2" fill="#660066"/><rect x="4" y="7" width="1" height="4" fill="#cceeff"/><rect x="5" y="3" width="2" height="8" fill="#ee2222"/><rect x="7" y="2" width="2" height="9" fill="#33dd33"/><rect x="9" y="7" width="1.5" height="4" fill="#aaaaff"/></svg>
<div class="t" style="left:-174.25px;top:549px;width:300px;text-align:right;color:#cc0000;letter-spacing:0.25px;">183</div>
<div class="t" style="left:152px;top:550px;font-weight:bold;-webkit-text-stroke:0.25px;letter-spacing:0.11px;">4.GÜZELKAYA</div>
<div class="t" style="left:232.4px;top:547px;letter-spacing:0.1px;font-size:9px;">G</div>
<div class="t" style="left:400px;top:549px;letter-spacing:0px;">4ydd</div>
<div class="t" style="left:436px;top:549px;letter-spacing:0.25px;">58</div>
<div class="t" style="left:497px;top:549px;font-weight:bold;-webkit-text-stroke:0.25px;letter-spacing:0.17px;">S.KAYA</div>
<div class="t" style="left:313px;top:549px;width:300px;text-align:right;">4</div>
<div class="t" style="left:398.75px;top:549px;width:300px;text-align:right;letter-spacing:0.25px;">5645336352</div>
<div class="t" style="left:446.4px;top:549px;width:300px;text-align:right;font-weight:bold;-webkit-text-stroke:0.25px;color:#0a9a5e;letter-spacing:0.9px;">53352</div>
<div class="r" style="left:18px;top:563px;width:14px;height:14px;background:#f0f0f0"></div>
<div class="r" style="left:33px;top:563px;width:32px;height:14px;background:#f0f0f0"></div>
<div class="r" style="left:66px;top:563px;width:37px;height:14px;background:#f0f0f0"></div>
<div class="r" style="left:104px;top:563px;width:29px;height:14px;background:#f0f0f0"></div>
<div class="r" style="left:134px;top:563px;width:13px;height:14px;background:#f0f0f0"></div>
<div class="r" style="left:148px;top:563px;width:250px;height:14px;background:#f0f0f0"></div>
<div class="r" style="left:399px;top:563px;width:32px;height:14px;background:#f0f0f0"></div>
<div class="r" style="left:432px;top:563px;width:36px;height:14px;background:#f0f0f0"></div>
<div class="r" style="left:469px;top:563px;width:26px;height:14px;background:#f0f0f0"></div>
<div class="r" style="left:496px;top:563px;width:96px;height:14px;background:#f0f0f0"></div>
<div class="r" style="left:593px;top:563px;width:23px;height:14px;background:#f0f0f0"></div>
<div class="r" style="left:617px;top:563px;width:84px;height:14px;background:#f0f0f0"></div>
<div class="r" style="left:702px;top:563px;width:46px;height:14px;background:#f0f0f0"></div>
<div class="r" style="left:749px;top:563px;width:56px;height:14px;background:#f0f0f0"></div>
<div class="r" style="left:806px;top:563px;width:10px;height:14px;background:#f0f0f0"></div>
<svg class="ci" style="left:18px;top:563px" width="14" height="14" viewBox="0 0 14 14"><rect x="1" y="1" width="1" height="11" fill="#222"/><rect x="1" y="11" width="11" height="1" fill="#333"/><rect x="2" y="9" width="2" height="2" fill="#660066"/><rect x="4" y="7" width="1" height="4" fill="#cceeff"/><rect x="5" y="3" width="2" height="8" fill="#ee2222"/><rect x="7" y="2" width="2" height="9" fill="#33dd33"/><rect x="9" y="7" width="1.5" height="4" fill="#aaaaff"/></svg>
<div class="t" style="left:-174.25px;top:564px;width:300px;text-align:right;color:#cc0000;letter-spacing:0.25px;">248</div>
<div class="t" style="left:152px;top:565px;font-weight:bold;-webkit-text-stroke:0.25px;letter-spacing:0.05px;">5.UÇAN</div>
<div class="t" style="left:197px;top:562px;letter-spacing:0.1px;font-size:9px;">G</div>
<div class="t" style="left:400px;top:564px;letter-spacing:0px;">5yad</div>
<div class="t" style="left:436px;top:564px;letter-spacing:0.25px;">57,5</div>
<div class="t" style="left:497px;top:564px;font-weight:bold;-webkit-text-stroke:0.25px;letter-spacing:0.078px;">H.KARATAŞ</div>
<div class="t" style="left:594px;top:564px;color:#333;letter-spacing:0.05px;">7 TS</div>
<div class="t" style="left:398.75px;top:564px;width:300px;text-align:right;letter-spacing:0.25px;">0261371382</div>
<div class="t" style="left:446.4px;top:564px;width:300px;text-align:right;font-weight:bold;-webkit-text-stroke:0.25px;color:#0a9a5e;letter-spacing:0.9px;">37382</div>
<div class="r" style="left:18px;top:578px;width:14px;height:14px;background:#f0f0f0"></div>
<div class="r" style="left:33px;top:578px;width:32px;height:14px;background:#f0f0f0"></div>
<div class="r" style="left:66px;top:578px;width:37px;height:14px;background:#f0f0f0"></div>
<div class="r" style="left:104px;top:578px;width:29px;height:14px;background:#f0f0f0"></div>
<div class="r" style="left:134px;top:578px;width:13px;height:14px;background:#f0f0f0"></div>
<div class="r" style="left:148px;top:578px;width:250px;height:14px;background:#f0f0f0"></div>
<div class="r" style="left:399px;top:578px;width:32px;height:14px;background:#f0f0f0"></div>
<div class="r" style="left:432px;top:578px;width:36px;height:14px;background:#f0f0f0"></div>
<div class="r" style="left:469px;top:578px;width:26px;height:14px;background:#f0f0f0"></div>
<div class="r" style="left:496px;top:578px;width:96px;height:14px;background:#f0f0f0"></div>
<div class="r" style="left:593px;top:578px;width:23px;height:14px;background:#f0f0f0"></div>
<div class="r" style="left:617px;top:578px;width:84px;height:14px;background:#f0f0f0"></div>
<div class="r" style="left:702px;top:578px;width:46px;height:14px;background:#f0f0f0"></div>
<div class="r" style="left:749px;top:578px;width:56px;height:14px;background:#f0f0f0"></div>
<div class="r" style="left:806px;top:578px;width:10px;height:14px;background:#f0f0f0"></div>
<svg class="ci" style="left:18px;top:578px" width="14" height="14" viewBox="0 0 14 14"><rect x="1" y="1" width="1" height="11" fill="#222"/><rect x="1" y="11" width="11" height="1" fill="#333"/><rect x="2" y="9" width="2" height="2" fill="#660066"/><rect x="4" y="7" width="1" height="4" fill="#cceeff"/><rect x="5" y="3" width="2" height="8" fill="#ee2222"/><rect x="7" y="2" width="2" height="9" fill="#33dd33"/><rect x="9" y="7" width="1.5" height="4" fill="#aaaaff"/></svg>
<div class="t" style="left:-174.25px;top:579px;width:300px;text-align:right;color:#cc0000;letter-spacing:0.25px;">172</div>
<div class="t" style="left:152px;top:580px;font-weight:bold;-webkit-text-stroke:0.25px;letter-spacing:0.55px;">6.NİLDA</div>
<div class="t" style="left:201.7px;top:577px;letter-spacing:0.1px;font-size:9px;">GK</div>
<div class="t" style="left:400px;top:579px;letter-spacing:0px;">5yad</div>
<div class="t" style="left:436px;top:579px;letter-spacing:0.25px;">56,5</div>
<div class="t" style="left:470px;top:579px;color:#cc0000;letter-spacing:0.25px;">+1</div>
<div class="t" style="left:497px;top:579px;font-weight:bold;-webkit-text-stroke:0.25px;letter-spacing:-0.15px;">A.SÖZEN</div>
<div class="t" style="left:313px;top:579px;width:300px;text-align:right;">6</div>
<div class="t" style="left:398.75px;top:579px;width:300px;text-align:right;letter-spacing:0.25px;">0425684761</div>
<div class="t" style="left:446.4px;top:579px;width:300px;text-align:right;font-weight:bold;-webkit-text-stroke:0.25px;color:#0a9a5e;letter-spacing:0.9px;">23737</div>
<div class="r" style="left:18px;top:593px;width:14px;height:14px;background:#f0f0f0"></div>
<div class="r" style="left:33px;top:593px;width:32px;height:14px;background:#f0f0f0"></div>
<div class="r" style="left:66px;top:593px;width:37px;height:14px;background:#f0f0f0"></div>
<div class="r" style="left:104px;top:593px;width:29px;height:14px;background:#f0f0f0"></div>
<div class="r" style="left:134px;top:593px;width:13px;height:14px;background:#f0f0f0"></div>
<div class="r" style="left:148px;top:593px;width:250px;height:14px;background:#f0f0f0"></div>
<div class="r" style="left:399px;top:593px;width:32px;height:14px;background:#f0f0f0"></div>
<div class="r" style="left:432px;top:593px;width:36px;height:14px;background:#f0f0f0"></div>
<div class="r" style="left:469px;top:593px;width:26px;height:14px;background:#f0f0f0"></div>
<div class="r" style="left:496px;top:593px;width:96px;height:14px;background:#f0f0f0"></div>
<div class="r" style="left:593px;top:593px;width:23px;height:14px;background:#f0f0f0"></div>
<div class="r" style="left:617px;top:593px;width:84px;height:14px;background:#f0f0f0"></div>
<div class="r" style="left:702px;top:593px;width:46px;height:14px;background:#f0f0f0"></div>
<div class="r" style="left:749px;top:593px;width:56px;height:14px;background:#f0f0f0"></div>
<div class="r" style="left:806px;top:593px;width:10px;height:14px;background:#f0f0f0"></div>
<svg class="ci" style="left:18px;top:593px" width="14" height="14" viewBox="0 0 14 14"><rect x="1" y="1" width="1" height="11" fill="#222"/><rect x="1" y="11" width="11" height="1" fill="#333"/><rect x="2" y="9" width="2" height="2" fill="#660066"/><rect x="4" y="7" width="1" height="4" fill="#cceeff"/><rect x="5" y="3" width="2" height="8" fill="#ee2222"/><rect x="7" y="2" width="2" height="9" fill="#33dd33"/><rect x="9" y="7" width="1.5" height="4" fill="#aaaaff"/></svg>
<div class="t" style="left:-174.25px;top:594px;width:300px;text-align:right;color:#cc0000;letter-spacing:0.25px;">201</div>
<div class="t" style="left:152px;top:595px;font-weight:bold;-webkit-text-stroke:0.25px;letter-spacing:0.561px;">7.ZENGİN KIZ</div>
<div class="t" style="left:232.7px;top:592px;letter-spacing:0.1px;font-size:9px;">G</div>
<div class="t" style="left:400px;top:594px;letter-spacing:0px;">7yad</div>
<div class="t" style="left:436px;top:594px;letter-spacing:0.25px;">55,5</div>
<div class="t" style="left:497px;top:594px;font-weight:bold;-webkit-text-stroke:0.25px;letter-spacing:-0.127px;">G.KOCAKAYA</div>
<div class="t" style="left:313px;top:594px;width:300px;text-align:right;">1</div>
<div class="t" style="left:398.75px;top:594px;width:300px;text-align:right;letter-spacing:0.25px;">6115143323</div>
<div class="t" style="left:446.4px;top:594px;width:300px;text-align:right;font-weight:bold;-webkit-text-stroke:0.25px;color:#0a9a5e;letter-spacing:0.9px;">51432</div>
<div class="icons" style="top:608px"><svg width="834" height="26" viewBox="0 202 834 26" style="left:0;top:0">
<defs>
<linearGradient id="gb" x1="0" y1="0" x2="1" y2="1"><stop offset="0" stop-color="#444"/><stop offset="0.5" stop-color="#bbb"/><stop offset="1" stop-color="#555"/></linearGradient>
<linearGradient id="gb2" x1="0" y1="0" x2="0" y2="1"><stop offset="0" stop-color="#666"/><stop offset="0.45" stop-color="#e6e6e6"/><stop offset="1" stop-color="#999"/></linearGradient>
<radialGradient id="gs" cx="0.35" cy="0.3" r="0.8"><stop offset="0" stop-color="#fff"/><stop offset="1" stop-color="#999"/></radialGradient>
<linearGradient id="gh2" x1="0" y1="0" x2="1" y2="0"><stop offset="0" stop-color="#bbb"/><stop offset="1" stop-color="#555"/></linearGradient>
<linearGradient id="gh3" x1="0" y1="0" x2="1" y2="0"><stop offset="0" stop-color="#e8e8e8"/><stop offset="0.5" stop-color="#aaa"/><stop offset="1" stop-color="#666"/></linearGradient>
<linearGradient id="gh" x1="0" y1="0" x2="1" y2="0"><stop offset="0" stop-color="#eee"/><stop offset="1" stop-color="#666"/></linearGradient>
</defs>
<path d="M495.8,208 A5.7,6.3 0 1 0 497.1,213.6" stroke="#737373" stroke-width="4.1" fill="none" stroke-linecap="round"/><path d="M491.2,212.9 H498.9" stroke="#737373" stroke-width="3.2" fill="none"/>
<g>
<ellipse cx="514.5" cy="206.5" rx="3.6" ry="1.6" fill="#f4f4f4" stroke="#777" stroke-width="0.9"/>
<path d="M511,208.5 L518,217.5 M518,208.5 L511,217.5" stroke="#333" stroke-width="0.9"/>
<path d="M511.2,218 L514.5,214.6 L517.8,218 Z" fill="#000"/>
<rect x="518.5" y="204.5" width="8" height="17" fill="#fff" stroke="#222" stroke-width="1"/>
<rect x="520" y="206" width="5.2" height="3.4" fill="#ccc" stroke="#333" stroke-width="0.8"/>
<g fill="#222"><rect x="520" y="211.5" width="1.8" height="1.8"/><rect x="523.2" y="211.5" width="1.8" height="4.5"/><rect x="520" y="214.5" width="1.8" height="1.8"/><rect x="520" y="217.6" width="1.8" height="1.8"/><rect x="523.2" y="217.6" width="1.8" height="1.8"/><rect x="517" y="218.6" width="1.4" height="1.4"/><rect x="512" y="220" width="1.4" height="1.4"/></g>
<rect x="513" y="221" width="13.5" height="1" fill="#333"/>
</g>
<g fill="#999">
<path d="M538.4,205 L539.5,206.5 C543,206.8 545.5,208.6 546.2,210.6 L541.6,214.6 L539.6,213.2 L535,216 C534.6,213 536.4,209 538.4,205 Z"/>
<path d="M537.5,219.6 L543.2,214.2 L545.2,216.6 L550,212.4 L550,219.6 Z"/>
</g>
<path d="M543.8,214.4 L550.2,208" stroke="#000" stroke-width="2.4"/>
<path d="M546.5,206.7 L552.2,206.7 L552.2,212.2 Z" fill="#000"/>
<path d="M569.5,205 V222 M573.3,208.4 C573,207.2 571.6,206.8 569.5,206.8 C567,206.8 565.6,208 565.6,209.7 C565.6,211.6 567.8,212.4 570,212.9 C572.6,213.5 574,214.7 574,216.6 C574,218.6 572.2,219.3 569.5,219.3 C567.2,219.3 565.8,218.6 565.4,217.3" stroke="#8a8a8a" stroke-width="1.1" fill="none"/>
<g transform="rotate(35 596.5 213)">
<rect x="589.5" y="215.8" width="12" height="5.6" rx="2" fill="url(#gb2)" stroke="#555" stroke-width="0.6"/>
<rect x="592.5" y="204.6" width="12" height="5.6" rx="2" fill="url(#gb2)" stroke="#555" stroke-width="0.6"/>
<rect x="595" y="210.2" width="3" height="5.6" fill="#777"/>
<ellipse cx="600" cy="218.6" rx="1.7" ry="2.8" fill="#f4f4f4" stroke="#555" stroke-width="0.6"/>
<ellipse cx="603.5" cy="207.4" rx="1.7" ry="2.8" fill="#f4f4f4" stroke="#555" stroke-width="0.6"/>
<rect x="588.2" y="216.6" width="2" height="4" fill="#444"/>
<rect x="591.2" y="205.4" width="2" height="4" fill="#444"/>
</g>
<g>
<ellipse cx="622.4" cy="206.2" rx="4.9" ry="1.8" fill="#e8e8e8" stroke="#666" stroke-width="1"/>
<path d="M618,207.8 C618,211 621.6,212 622.4,213 C623.2,212 626.8,211 626.8,207.8 M618,218.4 C618,215 621.6,214 622.4,213 C623.2,214 626.8,215 626.8,218.4" stroke="#333" stroke-width="0.9" fill="none"/>
<path d="M617.6,219.5 Q622.4,214.5 627.2,219.5 Q622.4,222.4 617.6,219.5 Z" fill="#888" stroke="#555" stroke-width="0.6"/>
</g>
<path d="M637,204 V221.6 H659.6" stroke="#000" stroke-width="1.6" fill="none"/>
<polyline points="638,207 642,210.5 648,210.5 652,207 655,209 659,213.5" stroke="#aaa" stroke-width="1" fill="none"/>
<polyline points="638,216 643,212 647,215 651,213.5 655,211.5 659,211" stroke="#222" stroke-width="0.9" fill="none"/>
<polyline points="638,213.5 643,219 647,214 650,215 654,219 658,215" stroke="#666" stroke-width="0.9" fill="none"/>
<rect x="671" y="204.6" width="5" height="2.6" rx="1.2" fill="#555"/>
<circle cx="673.5" cy="214.6" r="7.1" fill="url(#gs)" stroke="#111" stroke-width="1.2"/>
<polyline points="670.8,211.8 673.5,214.6 677.2,210.8" stroke="#111" stroke-width="1" fill="none"/>
<path d="M673.5,208.6 V210.2 M673.5,219 V220.6 M667.6,214.6 H669.2 M677.8,214.6 H679.4" stroke="#555" stroke-width="1"/>
<rect x="692.5" y="204.5" width="14" height="17" rx="1.5" fill="#fafafa" stroke="#333" stroke-width="1"/>
<rect x="694.6" y="206.4" width="9.8" height="3.6" fill="#ddd" stroke="#333" stroke-width="0.9"/>
<g fill="#222"><rect x="694.5" y="212" width="2" height="2"/><rect x="697.6" y="212" width="2" height="2"/><rect x="700.7" y="212" width="2" height="2"/><rect x="703.6" y="212" width="2" height="5"/>
<rect x="694.5" y="215" width="2" height="2"/><rect x="697.6" y="215" width="2" height="2"/><rect x="700.7" y="215" width="2" height="2"/>
<rect x="694.5" y="218" width="2" height="2"/><rect x="697.6" y="218" width="2" height="2"/><rect x="700.7" y="218" width="2" height="2"/><rect x="703.6" y="218" width="2" height="2"/></g>
<g fill="#c0c0c0">
<path d="M719.3,205 L720.3,206.6 C722,206.8 723.6,207.4 725,208.4 L723,214 L720.6,214.4 L716.4,215.6 C715.4,215.6 715,214.6 715.4,213.8 C716.8,210.6 718.4,208 719.3,205 Z"/>
<path d="M719,219.8 L719.6,217.2 C720.2,215.8 722,215.2 724,215 L725.6,219.8 Z"/>
</g>
<path d="M725.4,205 L726.4,206.4 C731.6,207.2 736.4,211 737,216 V219.8 H725 L724.4,215 C723.6,214.9 723,214.8 722.4,214.6 C722,212 723.6,208.6 725.4,205 Z" fill="#999"/>
<path d="M724.8,218.6 L728.6,213.4" stroke="#c4c4c4" stroke-width="1.1"/>
<g>
<ellipse cx="745.4" cy="208.4" rx="2.1" ry="3.1" fill="#c8c8c8"/>
<path d="M741,221 V213.6 C741,212.6 741.8,212 742.8,212 H748.5 V221 Z" fill="#c8c8c8"/>
<ellipse cx="752" cy="208.4" rx="2.1" ry="3.1" fill="#a0a0a0"/>
<path d="M747.6,221 V212 H755.5 V221 Z" fill="#a0a0a0"/>
<ellipse cx="758.4" cy="208.4" rx="2.2" ry="3.1" fill="#858585"/>
<path d="M754.4,221 V212 H761.8 C763,212 763.8,212.8 763.8,214 V221 Z" fill="#858585"/>
<path d="M742.2,216.4 V221 M749,216.4 V221 M755.6,216.4 V221 M762.4,216.4 V221" stroke="#f4f4f4" stroke-width="0.8"/>
</g>
<g>
<path d="M767,205 C769,204 772,204.6 774,204.4 C775.5,204.3 777,204 778,204.2 L776.6,209.6 L777.2,214.6 C775,214.8 772,215.2 770,215 C768.5,214.9 767,215 765.6,215.4 C765.4,212 766,208 767,205 Z" fill="#fff" stroke="#444" stroke-width="0.7"/>
<g fill="#222"><rect x="770.6" y="205.6" width="1.8" height="1.8"/><rect x="774" y="205.4" width="1.8" height="1.8"/><rect x="772.3" y="207.5" width="1.8" height="1.8"/><rect x="768.8" y="207.6" width="1.6" height="1.8"/><rect x="770.6" y="209.5" width="1.8" height="1.8"/><rect x="774" y="209.4" width="1.8" height="1.8"/><rect x="772.3" y="211.5" width="1.8" height="1.8"/><rect x="768.8" y="211.6" width="1.6" height="1.8"/><rect x="770.6" y="213.2" width="1.8" height="1.4"/><rect x="774" y="213.2" width="1.8" height="1.4"/></g>
<path d="M778.6,205.4 C779.4,204.4 784,204 787,204.4 L788.2,211 L791.4,212.4 L791,213.4 L779.6,213.4 Z" fill="url(#gh3)" stroke="#666" stroke-width="0.5"/>
<path d="M778,212.4 H788.6 L791.8,212.8 L790.8,214 H778 Z" fill="#3a3a3a"/>
<path d="M770.6,222 C771,219.4 773,217.8 776,216.4 C778,215.4 781,214.6 783.4,215 C786,215.6 788,217.6 787.8,219.6 C786,221.8 780,222.8 770.6,222 Z" fill="#e0e0e0" stroke="#222" stroke-width="0.9"/>
<path d="M775.6,219.8 L779.8,216.2 M779.4,221.2 L784.2,217.2 M783,220.6 L786.6,218.6" stroke="#444" stroke-width="0.9"/>
<circle cx="805" cy="213.1" r="8.6" fill="none" stroke="#555" stroke-width="1"/>
<g fill="#555"><circle cx="805.4" cy="207.4" r="1"/><rect x="804.2" y="210.2" width="2.3" height="6.4"/><rect x="802.8" y="210.2" width="1.6" height="1"/><rect x="802" y="216.4" width="7" height="1.3"/></g>
</svg>
</div>
<div class="r" style="left:18px;top:633px;width:798px;height:1px;background:#6699cc"></div>
</body></html>
